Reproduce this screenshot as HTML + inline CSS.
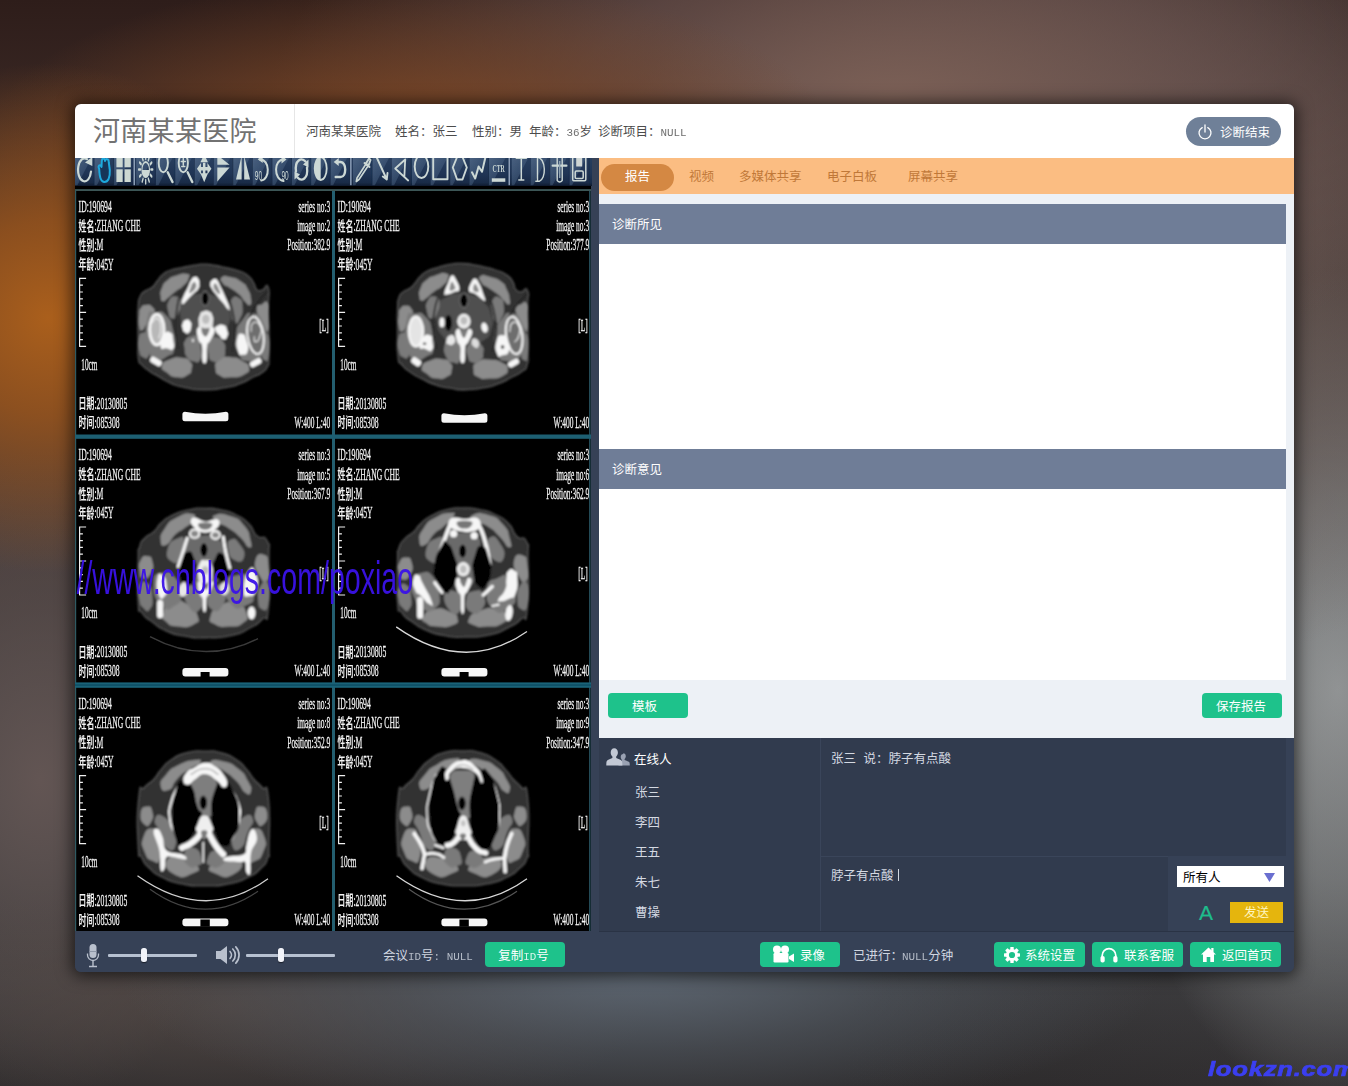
<!DOCTYPE html>
<html lang="zh-CN"><head><meta charset="utf-8"><title>远程会诊</title>
<style>
*{margin:0;padding:0;box-sizing:border-box}
html,body{width:1348px;height:1086px;overflow:hidden}
body{position:relative;font-family:"Liberation Sans","Noto Sans CJK SC",sans-serif;font-size:12.5px;
background:
 radial-gradient(ellipse 250px 255px at 48px 318px, #aa5f1c 0%, rgba(152,84,28,.85) 38%, rgba(120,70,40,0) 100%),
 radial-gradient(ellipse 430px 175px at 410px 150px, rgba(134,74,34,.95) 0%, rgba(120,68,36,.55) 55%, rgba(112,66,38,0) 100%),
 radial-gradient(ellipse 620px 290px at 890px 100px, rgba(126,98,88,.95) 0%, rgba(112,88,84,.65) 50%, rgba(98,82,80,0) 100%),
 radial-gradient(ellipse 520px 400px at 1090px 280px, rgba(114,98,92,.85) 0%, rgba(106,92,86,.5) 50%, rgba(100,88,84,0) 100%),
 linear-gradient(90deg, rgba(70,66,70,0) 62%, rgba(72,68,72,.2) 100%),
 radial-gradient(ellipse 230px 420px at 1338px 690px, #a2a6a6 0%, rgba(140,144,144,.8) 45%, rgba(100,102,102,0) 100%),
 radial-gradient(ellipse 520px 150px at 640px 975px, rgba(96,106,118,.9) 0%, rgba(86,94,104,.5) 50%, rgba(80,86,92,0) 100%),
 radial-gradient(ellipse 420px 130px at 230px 1005px, rgba(92,78,72,.6) 0%, rgba(88,76,72,.3) 55%, rgba(80,72,70,0) 100%),
 radial-gradient(ellipse 210px 330px at 40px 780px, rgba(100,86,84,.95) 0%, rgba(90,78,76,.5) 55%, rgba(80,70,70,0) 100%),
 linear-gradient(180deg,#2e1d1a 0%,#3e2c28 15%,#4a3c3a 45%,#454547 74%,#3a3a3c 90%,#2c2a2b 100%);
}
i{font-style:normal;font-family:"Liberation Mono",monospace;font-size:10.9px;opacity:.82}
.shadow{position:absolute;left:75px;top:104px;width:1219px;height:868px;border-radius:6px;box-shadow:0 1px 16px 3px rgba(0,0,0,.62);background:#364156}
.win{position:absolute;left:0;top:0;width:1348px;height:1086px}
.win>div,.win span,.hdr>div{position:absolute}
.hdr{left:75px;top:104px;width:1219px;height:54px;background:#fff;border-radius:6px 6px 0 0}
.logo{left:18px;top:8px;font-size:27px;font-weight:400;color:#727272;line-height:40px;white-space:nowrap;letter-spacing:.3px}
.vsep{left:219px;top:0;width:1px;height:54px;background:#e6e6e6}
.info{left:-75px;top:0;width:1219px;height:54px;color:#4c4c4c;font-weight:400}
.info span{top:1px;line-height:54px;white-space:nowrap}
.endbtn{left:1111px;top:13px;width:95px;height:29px;border-radius:15px;background:#6f8098;color:#fff}
.endbtn svg{position:absolute;left:11px;top:6.500px}
.endbtn span{left:34px;top:2px;line-height:29px;white-space:nowrap;font-weight:400}
.tb{left:75px;top:158px;width:517px;height:28px;overflow:hidden;background:#263a5a}
.ct{left:75px;top:186px;width:515.6px;height:745px;background:#000;overflow:hidden}
.tabs{left:599px;top:158px;width:695px;height:36px;background:#fbbd82;color:#c07838}
.tabs span{top:1px;line-height:36px;white-space:nowrap;margin-left:-599px;font-weight:400}
.pill{position:absolute;left:2px;top:6px;width:73px;height:27px;border-radius:14px;background:#d48843;color:#fff;text-align:center;line-height:27px}
.rp{left:599px;top:194px;width:695px;height:544px;background:#edf1f6}
.rp>div{position:absolute}
.rp .sech{left:0;width:687px;height:40px;background:#6f7d97;color:#fff;margin-top:-194px}
.rp .sech span{left:13px;top:1px;line-height:40px;white-space:nowrap;font-weight:400}
.rp .white{left:0;width:687px;background:#fff;margin-top:-194px}
.gbtn{position:absolute;height:25px;border-radius:4px;background:#1ec28b;color:#fff;text-align:center;line-height:29px;white-space:nowrap;font-weight:400}
.rp .gbtn{margin-left:-599px;margin-top:-194px}
.gbtn.ic svg{position:absolute}
.gbtn.ic span{top:0;line-height:29px}
.chat{left:0;top:0;width:0;height:0;color:#d4d9e2;font-weight:400}
.chat>div{position:absolute}
.chat-l{left:599px;top:738px;width:687px;height:194px;background:#313b4e}
.chat-r{left:1168px;top:856px;width:126px;height:76px;background:#364156}
.chat-rt{left:1286px;top:738px;width:8px;height:194px;background:#364156}
.vline{left:820px;top:738px;width:1px;height:194px;background:#3a455a}
.hline{left:820px;top:856px;width:348px;height:1px;background:#3a455a}
.people{position:absolute;left:606px;top:748px}
.t{white-space:nowrap;line-height:16px}
.t.w{color:#fff}
.caret{left:898px;top:869px;width:1px;height:12px;background:#d4d9e2}
.sel{left:1177px;top:866px;width:107px;height:21px;background:#fff;color:#000}
.sel span{left:6px;top:1px;line-height:22px;font-weight:400}
.sel svg{position:absolute;left:87px;top:7px}
.bigA{left:1199px;top:900px;font-size:21px;line-height:26px;color:#1ebc8c;font-weight:400;-webkit-text-stroke:.2px #1ebc8c;font-family:"Liberation Sans",sans-serif}
.send{left:1230px;top:902px;width:53px;height:21px;background:#e5b50d;color:#fff6c0;text-align:center;line-height:23px;font-weight:400}
.bb{left:75px;top:932px;width:1219px;height:40px;background:#364156;border-radius:0 0 6px 6px;color:#d0d6e0;font-weight:400}
.bb>*{margin-left:-75px;margin-top:-932px}
.bb .gbtn{color:#fff}
.track{position:absolute;top:954px;height:3px;background:#b7c1d1;border-radius:1px}
.thumb{position:absolute;top:948px;width:6px;height:14px;background:#f1f3f9;border-radius:2.500px;box-shadow:0 1px 1px rgba(0,0,0,.5)}
.wm2{position:absolute;left:1208px;top:1057px;font:italic 900 20.5px/24px "Liberation Sans",sans-serif;color:#3b3ff0;letter-spacing:.6px;white-space:nowrap;transform:scaleX(1.25);transform-origin:0 0;-webkit-text-stroke:.7px #3b3ff0}
.bline{left:599px;top:931px;width:695px;height:1px;background:#2a3345}

</style></head>
<body>
<div class="shadow"></div>
<div class="win">

<div class="hdr">
  <div class="logo">河南某某医院</div>
  <div class="vsep"></div>
  <div class="info"><span style="left:306px">河南某某医院</span><span style="left:395px">姓名：张三</span><span style="left:472px">性别：男</span><span style="left:529px">年龄：<i>36</i>岁</span><span style="left:598px">诊断项目：<i>NULL</i></span></div>
  <div class="endbtn"><svg width="16" height="16" viewBox="0 0 16 16"><path d="M5.2 3.6 A6 6 0 1 0 10.8 3.6" fill="none" stroke="#fff" stroke-width="1.3" stroke-linecap="round"/><path d="M8 1 V8" stroke="#fff" stroke-width="1.3" stroke-linecap="round"/></svg><span>诊断结束</span></div>
</div>
<div class="tb"><svg width="517" height="28" viewBox="0 0 517 28" style="position:absolute;left:0;top:0"><defs><linearGradient id="tg" x1="0" y1="0" x2="0" y2="1"><stop offset="0" stop-color="#283e5e"/><stop offset=".55" stop-color="#203555"/><stop offset=".88" stop-color="#192b47"/><stop offset="1" stop-color="#0f1b30"/></linearGradient><linearGradient id="fg" x1="0" y1="0" x2="1" y2="1"><stop offset="0" stop-color="#58708e" stop-opacity=".7"/><stop offset="1" stop-color="#3d5678" stop-opacity=".3"/></linearGradient><filter id="ib" x="-10%" y="-10%" width="120%" height="120%"><feGaussianBlur stdDeviation=".45"/></filter></defs><rect width="517" height="28" fill="url(#tg)"/><g filter="url(#ib)"><path d="M0 0H16.5L7.5 17L2 28H0Z" fill="url(#fg)"/><rect x="18.7" y="0" width="1" height="28" fill="#162842" opacity=".6"/><path d="M19.5 0H36L27 17L21.5 28H19.5Z" fill="url(#fg)"/><rect x="38.2" y="0" width="1" height="28" fill="#162842" opacity=".6"/><path d="M39.1 0H55.6L46.6 17L41.1 28H39.1Z" fill="url(#fg)"/><rect x="57.8" y="0" width="1" height="28" fill="#162842" opacity=".6"/><path d="M61.2 0H77.7L68.7 17L63.2 28H61.2Z" fill="url(#fg)"/><rect x="79.9" y="0" width="1" height="28" fill="#162842" opacity=".6"/><path d="M81 0H97.5L88.5 17L83 28H81Z" fill="url(#fg)"/><rect x="99.7" y="0" width="1" height="28" fill="#162842" opacity=".6"/><path d="M100.3 0H116.8L107.8 17L102.3 28H100.3Z" fill="url(#fg)"/><rect x="119" y="0" width="1" height="28" fill="#162842" opacity=".6"/><path d="M119.7 0H136.2L127.2 17L121.7 28H119.7Z" fill="url(#fg)"/><rect x="138.4" y="0" width="1" height="28" fill="#162842" opacity=".6"/><path d="M138.8 0H155.3L146.3 17L140.8 28H138.8Z" fill="url(#fg)"/><rect x="157.5" y="0" width="1" height="28" fill="#162842" opacity=".6"/><path d="M158.3 0H174.8L165.8 17L160.3 28H158.3Z" fill="url(#fg)"/><rect x="177" y="0" width="1" height="28" fill="#162842" opacity=".6"/><path d="M177.7 0H194.2L185.2 17L179.7 28H177.7Z" fill="url(#fg)"/><rect x="196.4" y="0" width="1" height="28" fill="#162842" opacity=".6"/><path d="M197.5 0H214L205 17L199.5 28H197.5Z" fill="url(#fg)"/><rect x="216.2" y="0" width="1" height="28" fill="#162842" opacity=".6"/><path d="M217 0H233.5L224.5 17L219 28H217Z" fill="url(#fg)"/><rect x="235.7" y="0" width="1" height="28" fill="#162842" opacity=".6"/><path d="M236.2 0H252.7L243.7 17L238.2 28H236.2Z" fill="url(#fg)"/><rect x="254.9" y="0" width="1" height="28" fill="#162842" opacity=".6"/><path d="M255.7 0H272.2L263.2 17L257.7 28H255.7Z" fill="url(#fg)"/><rect x="274.4" y="0" width="1" height="28" fill="#162842" opacity=".6"/><path d="M278 0H294.5L285.5 17L280 28H278Z" fill="url(#fg)"/><rect x="296.7" y="0" width="1" height="28" fill="#162842" opacity=".6"/><path d="M297.5 0H314L305 17L299.5 28H297.5Z" fill="url(#fg)"/><rect x="316.2" y="0" width="1" height="28" fill="#162842" opacity=".6"/><path d="M316.7 0H333.2L324.2 17L318.7 28H316.7Z" fill="url(#fg)"/><rect x="335.4" y="0" width="1" height="28" fill="#162842" opacity=".6"/><path d="M337 0H353.5L344.5 17L339 28H337Z" fill="url(#fg)"/><rect x="355.7" y="0" width="1" height="28" fill="#162842" opacity=".6"/><path d="M355.7 0H372.2L363.2 17L357.7 28H355.7Z" fill="url(#fg)"/><rect x="374.4" y="0" width="1" height="28" fill="#162842" opacity=".6"/><path d="M375.3 0H391.8L382.8 17L377.3 28H375.3Z" fill="url(#fg)"/><rect x="394" y="0" width="1" height="28" fill="#162842" opacity=".6"/><path d="M394.5 0H411L402 17L396.5 28H394.5Z" fill="url(#fg)"/><rect x="413.2" y="0" width="1" height="28" fill="#162842" opacity=".6"/><path d="M414 0H430.5L421.5 17L416 28H414Z" fill="url(#fg)"/><rect x="432.7" y="0" width="1" height="28" fill="#162842" opacity=".6"/><path d="M436.8 0H453.3L444.3 17L438.8 28H436.8Z" fill="url(#fg)"/><rect x="455.5" y="0" width="1" height="28" fill="#162842" opacity=".6"/><path d="M455.8 0H472.3L463.3 17L457.8 28H455.8Z" fill="url(#fg)"/><rect x="474.5" y="0" width="1" height="28" fill="#162842" opacity=".6"/><path d="M475.2 0H491.7L482.7 17L477.2 28H475.2Z" fill="url(#fg)"/><rect x="493.9" y="0" width="1" height="28" fill="#162842" opacity=".6"/><path d="M494.7 0H511.2L502.2 17L496.7 28H494.7Z" fill="url(#fg)"/><rect x="513.4" y="0" width="1" height="28" fill="#162842" opacity=".6"/></g><rect x="58.5" y="0" width="1.500" height="28" fill="#8b9db6"/><rect x="275.1" y="0" width="1.500" height="28" fill="#8b9db6"/><rect x="433.5" y="0" width="1.500" height="28" fill="#8b9db6"/><g filter="url(#ib)"><g transform="translate(9.5 0)"><path d="M2.500 1.200A6.500 11.500 0 1 0 6.500 13.500" fill="none" stroke="#ccd8d5" stroke-width="2.2" stroke-linecap="round" stroke-linejoin="round"/><path d="M0.500 4.500L7.800 -1V8z" fill="#ccd8d5"/></g><g transform="translate(29 0)"><path d="M-4.800 11C-6.500 7.500 -3.500 5.500 -2.500 9L-2.200 3C-2 -0.500 0.800 -0.500 1 3C1.800 0 4.800 0.500 4.800 4.500L5.800 12C6.200 20 4 24 0.300 24C-3 24 -4.500 20 -4.800 11Z" fill="#173558" stroke="#1fa9dd" stroke-width="2" stroke-linejoin="round"/></g><g transform="translate(48.6 0)"><rect x="-7.2" y="-1" width="6.3" height="10.3" fill="#cdd8d2"/><rect x="0.9" y="-1" width="6.3" height="10.3" fill="#cdd8d2"/><rect x="-7.2" y="11.3" width="6.3" height="12.7" fill="#cdd8d2"/><rect x="0.9" y="11.3" width="6.3" height="12.7" fill="#cdd8d2"/></g><g transform="translate(70.7 0)"><g transform="translate(0 11.500) scale(.5 1)"><path d="M0 -10.500V-14" transform="rotate(0)" stroke="#ccd8d5" stroke-width="2.600" stroke-linecap="round"/><path d="M0 -10.500V-14" transform="rotate(30)" stroke="#ccd8d5" stroke-width="2.600" stroke-linecap="round"/><path d="M0 -10.500V-14" transform="rotate(60)" stroke="#ccd8d5" stroke-width="2.600" stroke-linecap="round"/><path d="M0 -10.500V-14" transform="rotate(90)" stroke="#ccd8d5" stroke-width="2.600" stroke-linecap="round"/><path d="M0 -10.500V-14" transform="rotate(120)" stroke="#ccd8d5" stroke-width="2.600" stroke-linecap="round"/><path d="M0 -10.500V-14" transform="rotate(150)" stroke="#ccd8d5" stroke-width="2.600" stroke-linecap="round"/><path d="M0 -10.500V-14" transform="rotate(180)" stroke="#ccd8d5" stroke-width="2.600" stroke-linecap="round"/><path d="M0 -10.500V-14" transform="rotate(210)" stroke="#ccd8d5" stroke-width="2.600" stroke-linecap="round"/><path d="M0 -10.500V-14" transform="rotate(240)" stroke="#ccd8d5" stroke-width="2.600" stroke-linecap="round"/><path d="M0 -10.500V-14" transform="rotate(270)" stroke="#ccd8d5" stroke-width="2.600" stroke-linecap="round"/><path d="M0 -10.500V-14" transform="rotate(300)" stroke="#ccd8d5" stroke-width="2.600" stroke-linecap="round"/><path d="M0 -10.500V-14" transform="rotate(330)" stroke="#ccd8d5" stroke-width="2.600" stroke-linecap="round"/><circle r="7.500" fill="none" stroke="#ccd8d5" stroke-width="2.2" stroke-linecap="round" stroke-linejoin="round"/><path d="M-7.500 0.500A7.500 7.500 0 0 0 7.500 0.500Z" fill="#ccd8d5"/></g></g><g transform="translate(90.5 0)"><ellipse cx="-2.200" cy="5" rx="4.600" ry="9.200" fill="none" stroke="#ccd8d5" stroke-width="1.9" stroke-linecap="round" stroke-linejoin="round"/><path d="M2.200 14.300L7 24" fill="none" stroke="#ccd8d5" stroke-width="2.4" stroke-linecap="round" stroke-linejoin="round"/></g><g transform="translate(109.8 0)"><ellipse cx="-1.500" cy="5" rx="4.600" ry="9.200" fill="none" stroke="#ccd8d5" stroke-width="1.9" stroke-linecap="round" stroke-linejoin="round"/><path d="M2.800 14.300L7.500 24" fill="none" stroke="#ccd8d5" stroke-width="2.4" stroke-linecap="round" stroke-linejoin="round"/><path d="M-3.500 3.500H0.500M-1.500 0.500V7M-3 8.500H0" fill="none" stroke="#ccd8d5" stroke-width="1.5" stroke-linecap="round" stroke-linejoin="round"/></g><g transform="translate(129.2 0)"><g transform="translate(0 10.800) scale(.5 1)" fill="#ccd8d5"><path d="M-14.500 0L-6.500 -5.800V-1.700H6.500V-5.800L14.500 0L6.500 5.800V1.700H-6.500V5.800Z"/><path d="M0 13.500L-7.500 4.500H-2.400V-6H2.400V4.500H7.500Z"/><path d="M0 -14.500L-7.500 -6.500H7.500Z"/></g></g><g transform="translate(148.3 0)"><path d="M-6 -3V6.800H6.300Z" fill="#ccd8d5"/><path d="M-6 9.500H6.300L-6 23.500Z" fill="#ccd8d5"/></g><g transform="translate(167.8 0)"><path d="M-6.800 21.500H-1.200V-2Z" fill="#ccd8d5"/><path d="M1.400 -2V21.500H7.300Z" fill="#ccd8d5"/></g><g transform="translate(187.2 0)"><path d="M-2.500 1.500C8 1 8 21.500 -1 22.500" fill="none" stroke="#ccd8d5" stroke-width="2" stroke-linecap="round" stroke-linejoin="round"/><path d="M-4.500 1.200L0.500 -2.500V5z" fill="#ccd8d5"/><text transform="translate(-7.400 21.500) scale(.52 1)" font-family="'Liberation Sans',sans-serif" font-size="12.500" fill="#ccd8d5">90</text></g><g transform="translate(207 0)"><path d="M2 1.500C-8.500 1 -8.500 21.500 1.500 23" fill="none" stroke="#ccd8d5" stroke-width="2" stroke-linecap="round" stroke-linejoin="round"/><path d="M4.500 1.500L-0.500 -2.500V5.500z" fill="#ccd8d5"/><text transform="translate(-0.500 21.500) scale(.52 1)" font-family="'Liberation Sans',sans-serif" font-size="12.500" fill="#ccd8d5">90</text></g><g transform="translate(226.5 0)"><path d="M-5.500 13.500C-7 2 0 -1 4 3.500" fill="none" stroke="#ccd8d5" stroke-width="2.3" stroke-linecap="round" stroke-linejoin="round"/><path d="M5.500 9.500C7 21 0 24 -4 19.500" fill="none" stroke="#ccd8d5" stroke-width="2.3" stroke-linecap="round" stroke-linejoin="round"/><path d="M1.500 6.500L7 1.500V9.500z" fill="#ccd8d5"/><path d="M-1.500 16.500L-7 21.500V13.500z" fill="#ccd8d5"/></g><g transform="translate(245.7 0)"><ellipse cx="0" cy="10.500" rx="6" ry="11.500" fill="none" stroke="#ccd8d5" stroke-width="1.8" stroke-linecap="round" stroke-linejoin="round"/><path d="M0 -1A6 11.500 0 0 0 0 22Z" fill="#ccd8d5"/></g><g transform="translate(265.2 0)"><path d="M-2.500 4H0.500C6.500 4 6.500 19 0.500 19H-4.500" fill="none" stroke="#ccd8d5" stroke-width="2.4" stroke-linecap="round" stroke-linejoin="round"/><path d="M-6.500 4L-1.500 0V8z" fill="#ccd8d5"/></g><g transform="translate(287.5 0)"><path d="M3.500 6L-5.500 20L-6.200 23.500L-3.500 21.500L5.500 8Z" fill="none" stroke="#ccd8d5" stroke-width="1.6" stroke-linecap="round" stroke-linejoin="round"/><path d="M2 5L7 9M6.500 0.500L3.500 5.500L6 7.500L8 2Z" fill="none" stroke="#ccd8d5" stroke-width="2" stroke-linecap="round" stroke-linejoin="round"/></g><g transform="translate(307 0)"><path d="M-5.500 -1L4.800 21.500M5.500 15L4.800 21.500L0.800 18.500" fill="none" stroke="#ccd8d5" stroke-width="1.9" stroke-linecap="round" stroke-linejoin="round"/></g><g transform="translate(326.2 0)"><path d="M4 1.500L-6 10.500L7 22.500M4 1.500L3.200 18" fill="none" stroke="#ccd8d5" stroke-width="1.8" stroke-linecap="round" stroke-linejoin="round"/></g><g transform="translate(346.5 0)"><ellipse cx="0" cy="8.500" rx="6.800" ry="11.500" fill="none" stroke="#ccd8d5" stroke-width="1.9" stroke-linecap="round" stroke-linejoin="round"/></g><g transform="translate(365.2 0)"><rect x="-7" y="-3" width="14.300" height="24.300" fill="none" stroke="#ccd8d5" stroke-width="1.9" stroke-linecap="round" stroke-linejoin="round"/></g><g transform="translate(384.8 0)"><path d="M-7 9.500L-2.700 -1H2.700L7 9.500L2.700 21.500H-2.700Z" fill="none" stroke="#ccd8d5" stroke-width="1.9" stroke-linecap="round" stroke-linejoin="round"/></g><g transform="translate(404 0)"><path d="M-7 14.300L-3.800 20.500L-0.400 8.500L3 13.800L6.500 -1" fill="none" stroke="#ccd8d5" stroke-width="2" stroke-linecap="round" stroke-linejoin="round"/></g><g transform="translate(423.5 0)"><text transform="translate(-6 13.500) scale(.55 1)" font-family="'Liberation Serif',serif" font-weight="bold" font-size="10.500" fill="#ccd8d5">CTR</text><rect x="-6.700" y="20.300" width="13.500" height="3.500" fill="#ccd8d5"/></g><g transform="translate(446.3 0)"><path d="M0 0V22M-5 0.300H5M-2.500 22H2.500" fill="none" stroke="#ccd8d5" stroke-width="1.5" stroke-linecap="round" stroke-linejoin="round"/></g><g transform="translate(465.3 0)"><path d="M-2.800 -1V23M-4.500 23.300H-1C6 21 6 1 -3 -1" fill="none" stroke="#ccd8d5" stroke-width="1.4" stroke-linecap="round" stroke-linejoin="round"/></g><g transform="translate(484.7 0)"><path d="M-2.500 -1V22.500Q0 25.500 2.500 22.500V-1" fill="none" stroke="#ccd8d5" stroke-width="1.4" stroke-linecap="round" stroke-linejoin="round"/><path d="M-7 7.700H6.700" fill="none" stroke="#ccd8d5" stroke-width="2.2" stroke-linecap="round" stroke-linejoin="round"/><path d="M0 3V20" stroke="#8fa3b3" stroke-width="1.500"/></g><g transform="translate(504.2 0)"><path d="M-6.500 -2V21.500Q-6.500 22.700 -5.300 22.700H5.400Q6.600 22.700 6.600 21.500V-2" fill="none" stroke="#ccd8d5" stroke-width="1.5" stroke-linecap="round" stroke-linejoin="round"/><rect x="-3" y="-1" width="6" height="9.500" fill="#cfd6d4"/><rect x="-4" y="13" width="8" height="7.500" rx="1.200" fill="none" stroke="#ccd8d5" stroke-width="1.5" stroke-linecap="round" stroke-linejoin="round"/><rect x="-1.800" y="15.500" width="3.600" height="2.500" fill="#1a2c48"/></g></g><rect x="0" y="27" width="517" height="1" fill="#101c30" opacity=".8"/></svg></div>
<div class="ct"><svg width="516" height="745" viewBox="0 0 516 745" style="position:absolute;left:0;top:0"><defs><filter id="bl" x="-5%" y="-5%" width="110%" height="110%"><feGaussianBlur stdDeviation="7"/></filter><filter id="tb" x="-5%" y="-20%" width="110%" height="140%"><feGaussianBlur stdDeviation="0.35"/></filter><clipPath id="cc"><rect x="-40" y="-60" width="1166" height="1300"/></clipPath></defs><g transform="translate(58 72) scale(0.12891)" filter="url(#bl)"><path d="M560 48C506.7 47 540 46 480 55C420 64 443.3 61.7 380 75C316.7 88.3 338.3 78.3 290 95C241.7 111.7 268.3 98.3 235 125C201.7 151.7 218.3 141.7 190 175C161.7 208.3 181.7 198.3 150 225C118.3 251.7 126.7 230 95 255C63.3 280 73.3 258.3 55 300C36.7 341.7 45.7 313.3 40 380C34.3 446.7 38 413.3 38 500C38 586.7 38.7 546.7 40 640C41.3 733.3 32 716.7 42 780C52 843.3 40.7 796.7 70 830C99.3 863.3 86.7 850 130 880C173.3 910 146.7 890 200 920C253.3 950 223.3 941.7 290 970C356.7 998.3 310 987.7 400 1005C490 1022.3 453.3 1022 560 1022C666.7 1022 630 1020.7 720 1005C810 989.3 760 1001.7 830 975C900 948.3 873.3 953.3 930 925C986.7 896.7 961.7 918.3 1000 890C1038.3 861.7 1026.7 876.7 1045 840C1063.3 803.3 1051.7 860 1055 780C1058.3 700 1056.7 726.7 1055 600C1053.3 473.3 1051.7 523.3 1050 400C1048.3 276.7 1066.7 280 1050 230C1033.3 180 1030 245 1000 250C970 255 981.7 265 960 245C938.3 225 958.3 226.7 935 190C911.7 153.3 928.3 165 890 135C851.7 105 876.7 120 820 100C763.3 80 780 89 720 75C660 61 693.3 67 640 58C586.7 49 613.3 49 560 48Z" fill="#333" stroke="#565656" stroke-width="10"/><path d="M215 300C211.7 265 206.7 273.3 225 230C243.3 186.7 231.7 201.7 270 170C308.3 138.3 290 150 340 135C390 120 390 116.7 420 125C450 133.3 440 130 430 160C420 190 423.3 181.7 390 215C356.7 248.3 370 228.3 330 260C290 291.7 301.7 285 270 310C238.3 335 253.3 338.3 235 335C216.7 331.7 218.3 335 215 300Z" fill="#8c8c8c"/><path d="M690 150C710 133.3 710 138.3 760 150C810 161.7 796.7 155 840 185C883.3 215 865 195 890 240C915 285 910 278.3 915 320C920 361.7 920 358.3 905 365C890 371.7 898.3 368.3 870 340C841.7 311.7 860 316.7 820 280C780 243.3 790 256.7 750 230C710 203.3 720 226.7 700 200C680 173.3 670 166.7 690 150Z" fill="#8c8c8c"/><path d="M48 440C52 393.3 42.7 415 60 390C77.3 365 70 368.3 100 365C130 361.7 128.3 358.3 150 380C171.7 401.7 171.7 400 165 430C158.3 460 151.7 440 130 470C108.3 500 120 490 100 520C80 550 87.3 556.7 70 560C52.7 563.3 55.3 570 48 530C40.7 490 44 486.7 48 440Z" fill="#8c8c8c"/><path d="M45 620C55.7 573.3 56.7 586.7 80 580C103.3 573.3 98.3 566.7 115 600C131.7 633.3 128.3 626.7 130 680C131.7 733.3 136.7 730 120 760C103.3 790 104 783.3 80 770C56 756.7 59.7 770 48 720C36.3 670 34.3 666.7 45 620Z" fill="#7a7a7a"/><path d="M110 470C130 376.7 130 426.7 180 420C230 413.3 216.7 403.3 260 450C303.3 496.7 290 476.7 310 560C330 643.3 333.3 633.3 320 700C306.7 766.7 316.7 733.3 270 760C223.3 786.7 230 800 180 780C130 760 143.3 803.3 120 700C96.7 596.7 90 563.3 110 470Z" fill="#7a7a7a"/><path d="M960 390C963.3 350 971.7 373.3 1000 360C1028.3 346.7 1027.7 320 1045 350C1062.3 380 1050.3 380 1052 450C1053.7 520 1060.7 530 1050 560C1039.3 590 1040 566.7 1020 540C1000 513.3 1010 530 990 480C970 430 956.7 430 960 390Z" fill="#8c8c8c"/><path d="M1005 640C1021.7 593.3 1034.3 560 1050 600C1065.7 640 1062 696.7 1052 760C1042 823.3 1037.3 796.7 1020 790C1002.7 783.3 1005 790 1000 740C995 690 988.3 686.7 1005 640Z" fill="#7a7a7a"/><path d="M800 600C810 513.3 806.7 536.7 850 480C893.3 423.3 876.7 423.3 930 430C983.3 436.7 976.7 426.7 1010 500C1043.3 573.3 1033.3 563.3 1030 650C1026.7 736.7 1043.3 710 1000 760C956.7 810 960 806.7 900 800C840 793.3 853.3 806.7 820 740C786.7 673.3 790 686.7 800 600Z" fill="#7a7a7a"/><path d="M225 835C233.3 800 238.3 805 290 785C341.7 765 330 770 380 775C430 780 415 771.7 440 800C465 828.3 461.7 823.3 455 860C448.3 896.7 458.3 888.3 420 910C381.7 931.7 391.7 931.7 340 925C288.3 918.3 303.3 920 265 890C226.7 860 216.7 870 225 835Z" fill="#8c8c8c"/><path d="M640 860C636.7 818.3 630 820 670 790C710 760 700 766.7 760 770C820 773.3 803.3 773.3 850 800C896.7 826.7 896.7 815 900 850C903.3 885 906.7 880 860 905C813.3 930 820 921.7 760 925C700 928.3 720 936.7 680 915C640 893.3 643.3 901.7 640 860Z" fill="#8c8c8c"/><path d="M380 360C406.7 306.7 403.3 326.7 450 300C496.7 273.3 463.3 283.3 520 280C576.7 276.7 560 270 620 290C680 310 656.7 296.7 700 340C743.3 383.3 736.7 360 750 420C763.3 480 756.7 460 740 520C723.3 580 746.7 560 700 600C653.3 640 673.3 630 600 640C526.7 650 546.7 656.7 480 630C413.3 603.3 436.7 616.7 400 560C363.3 503.3 376.7 526.7 370 460C363.3 393.3 353.3 413.3 380 360Z" fill="#505050"/><path d="M405 640C421.7 610 416.7 616.7 450 610C483.3 603.3 480 590 505 620C530 650 520 643.3 525 700C530 756.7 538.3 756.7 520 790C501.7 823.3 503.3 806.7 470 800C436.7 793.3 443.3 803.3 420 770C396.7 736.7 405 743.3 400 700C395 656.7 388.3 670 405 640Z" fill="#7a7a7a"/><path d="M590 640C611.7 600 613.3 616.7 650 620C686.7 623.3 678.3 616.7 700 650C721.7 683.3 718.3 676.7 715 720C711.7 763.3 721.7 753.3 690 780C658.3 806.7 655 813.3 620 800C585 786.7 595 793.3 585 740C575 686.7 568.3 680 590 640Z" fill="#7a7a7a"/><path d="M280 330C301.7 290 310 296.7 340 300C370 303.3 366.7 296.7 370 340C373.3 383.3 370 386.7 350 430C330 473.3 335 473.3 310 470C285 466.7 285 466.7 275 420C265 373.3 258.3 370 280 330Z" fill="#7a7a7a"/><path d="M760 330C780 293.3 790 293.3 820 310C850 326.7 846.7 326.7 850 380C853.3 433.3 850 430 830 470C810 510 813.3 516.7 790 500C766.7 483.3 770 476.7 760 420C750 363.3 740 366.7 760 330Z" fill="#7a7a7a"/><path d="M370 250C360 300 353.3 296.7 340 400C326.7 503.3 326.7 460 330 560C333.3 660 343.3 653.3 350 700" fill="none" stroke="#2a2a2a" stroke-width="14" stroke-linecap="round" stroke-linejoin="round"/><path d="M740 300C753.3 350 763.3 350 780 450C796.7 550 793.3 510 790 600C786.7 690 776.7 680 770 720" fill="none" stroke="#2a2a2a" stroke-width="14" stroke-linecap="round" stroke-linejoin="round"/><path d="M1040 260C1013.3 293.3 1006.7 290 960 360C913.3 430 920 433.3 900 470" fill="none" stroke="#262626" stroke-width="16" stroke-linecap="round" stroke-linejoin="round"/><path d="M478 148C496.3 143 492.7 142.7 505 160C517.3 177.3 515 173.3 515 200C515 226.7 520 215 505 240C490 265 498.3 246.7 470 275C441.7 303.3 446.7 298.3 420 325C393.3 351.7 404 350 390 355C376 360 376.3 361.7 378 340C379.7 318.3 379.3 326.7 395 290C410.7 253.3 406.7 268.3 425 230C443.3 191.7 432.3 202.3 450 175C467.7 147.7 459.7 153 478 148Z" fill="#f6f6f6"/><path d="M468 190C482.3 178.3 482.3 185 488 200C493.7 215 496 213.3 485 235C474 256.7 470.7 253.3 455 265C439.3 276.7 441.3 280 438 270C434.7 260 435 261.7 445 235C455 208.3 453.7 201.7 468 190Z" fill="#8a8a8a"/><path d="M612 175C623.7 162.3 620.7 162 635 162C649.3 162 640 154 655 175C670 196 660 183.3 680 225C700 266.7 692.3 246.7 715 300C737.7 353.3 741.3 353.3 748 385C754.7 416.7 751 406.7 735 395C719 383.3 728.3 385 700 350C671.7 315 680 328.3 650 290C620 251.7 626.7 265 610 235C593.3 205 599.3 220 600 200C600.7 180 600.3 187.7 612 175Z" fill="#f6f6f6"/><path d="M632 200C639.7 193.3 634.7 186.7 648 205C661.3 223.3 665.3 230 672 255C678.7 280 678.7 280 668 280C657.3 280 654.3 273.3 640 255C625.7 236.7 627.7 243.3 625 225C622.3 206.7 624.3 206.7 632 200Z" fill="#8a8a8a"/><ellipse cx="185" cy="555" rx="56" ry="118" fill="#b8b8b8" stroke="#f6f6f6" stroke-width="22"/><path d="M235 600C260 563.3 264.3 566.7 290 580C315.7 593.3 305.3 598.3 312 640C318.7 681.7 327.3 685 310 705C292.7 725 291.7 705 260 700C228.3 695 223.3 723.3 215 690C206.7 656.7 210 636.7 235 600Z" fill="#f6f6f6"/><path d="M150 500C163.3 490 168.3 456.7 190 470C211.7 483.3 211.7 490 215 540C218.3 590 205 593.3 200 620" fill="none" stroke="#e8e8e8" stroke-width="10" stroke-linecap="round" stroke-linejoin="round"/><rect x="130.5" y="779" width="95" height="48" rx="18" fill="#f6f6f6" transform="rotate(30 178 803)"/><ellipse cx="950" cy="600" rx="62" ry="145" fill="#6e6e6e" transform="rotate(-8 950 600)" stroke="#f6f6f6" stroke-width="15"/><path d="M915 570C920 548.3 906.7 520 930 505C953.3 490 966.7 491.7 985 525C1003.3 558.3 996.7 563.3 985 605C973.3 646.7 965 648.3 950 650C935 651.7 943.3 623.3 940 610" fill="none" stroke="#eee" stroke-width="8" stroke-linecap="round" stroke-linejoin="round"/><path d="M810 620C821.7 576.7 826.7 583.3 850 590C873.3 596.7 866.7 596.7 880 640C893.3 683.3 900 683.3 890 720C880 756.7 875 750 850 750C825 750 828.3 763.3 815 720C801.7 676.7 798.3 663.3 810 620Z" fill="#f6f6f6"/><rect x="904.5" y="789.5" width="95" height="45" rx="18" fill="#f6f6f6" transform="rotate(-28 952 812)"/><path d="M520 440C531.7 411.7 521.7 423.3 545 415C568.3 406.7 566.7 405 590 415C613.3 425 605 416.7 615 445C625 473.3 625 468.3 620 500C615 531.7 630 526.7 600 540C570 553.3 560 553.3 530 540C500 526.7 513.3 533.3 510 500C506.7 466.7 508.3 468.3 520 440Z" fill="#e6e6e6"/><ellipse cx="565" cy="475" rx="28" ry="35" fill="#bdbdbd"/><path d="M495 560C498 539 514 527 525 535C536 543 540 587 550 600C560 613 565 613 575 600C585 587 588 543 600 535C612 527 635 539 635 560C635 581 612 616 600 640C588 664 581 648 575 680C569 712 577 776 570 800C563 824 547 824 540 800C533 776 541 712 535 680C529 648 518 664 510 640C502 616 492 581 495 560Z" fill="#f6f6f6"/><path d="M535 550C545 542 581 542 590 550C599 558 586 579 580 590C574 601 568 605 560 605C552 605 545 601 540 590C535 579 525 558 535 550Z" fill="#7c7c7c"/><path d="M385 510C393.3 488.3 390 485 410 480C430 475 431.7 475 445 495C458.3 515 455 511.7 450 540C445 568.3 446.7 568.3 430 580C413.3 591.7 415 586.7 400 575C385 563.3 390 566.7 385 545C380 523.3 376.7 531.7 385 510Z" fill="#f6f6f6"/><path d="M650 530C670 516.7 673.3 510 700 520C726.7 530 720 530 730 560C740 590 740 586.7 730 610C720 633.3 720 633.3 700 630C680 626.7 690 623.3 670 600C650 576.7 646.7 583.3 640 560C633.3 536.7 630 543.3 650 530Z" fill="#f6f6f6"/><ellipse cx="465" cy="640" rx="9" ry="14" fill="#ddd"/><ellipse cx="560" cy="315" rx="34" ry="60" fill="#777"/><ellipse cx="560" cy="315" rx="27" ry="52" fill="#000"/></g><g transform="translate(318 72) scale(0.12891)" filter="url(#bl)"><path d="M520 42C463.3 42 496.7 40 440 50C383.3 60 406.7 55.3 350 72C293.3 88.7 315 77.3 270 100C225 122.7 248.3 108.3 215 140C181.7 171.7 198.3 163.3 170 195C141.7 226.7 160 212.7 130 235C100 257.3 108.3 237 80 262C51.7 287 60 264 45 310C30 356 38.3 316.7 35 400C31.7 483.3 34 440 35 560C36 680 26.3 670 38 760C49.7 850 36 786.7 70 830C104 873.3 86.7 853.3 140 890C193.3 926.7 166.7 908.3 230 940C293.3 971.7 260 961.7 330 985C400 1008.3 363.3 997.7 440 1010C516.7 1022.3 473.3 1022.7 560 1022C646.7 1021.3 613.3 1023.7 700 1008C786.7 992.3 746.7 1002.7 820 975C893.3 947.3 860 956.7 920 925C980 893.3 960 911.7 1000 880C1040 848.3 1024 890 1040 830C1056 770 1046.3 843.3 1048 700C1049.7 556.7 1046 548.3 1045 400C1044 251.7 1063.3 301 1045 255C1026.7 209 1021.7 267 990 262C958.3 257 970 265.7 950 240C930 214.3 953.3 221.7 930 185C906.7 148.3 923.3 160 880 130C836.7 100 860 115.7 800 95C740 74.3 763.3 83 700 68C636.7 53 670 58.7 610 50C550 41.3 576.7 42 520 42Z" fill="#333" stroke="#565656" stroke-width="10"/><path d="M205 300C201.7 266.7 196.7 273.3 215 230C233.3 186.7 221.7 201.7 260 170C298.3 138.3 280 151.7 330 135C380 118.3 378.3 111.7 410 120C441.7 128.3 433.3 128.3 425 160C416.7 191.7 420 181.7 385 215C350 248.3 361.7 228.3 320 260C278.3 291.7 291.7 286.7 260 310C228.3 333.3 243.3 333.3 225 330C206.7 326.7 208.3 333.3 205 300Z" fill="#8c8c8c"/><path d="M680 140C703.3 125 706.7 135 760 150C813.3 165 800 155 840 185C880 215 858.3 195 880 240C901.7 285 900 280 905 320C910 360 910 356.7 895 360C880 363.3 888.3 356.7 860 330C831.7 303.3 850 313.3 810 280C770 246.7 780 258.3 740 230C700 201.7 710 225 690 195C670 165 656.7 155 680 140Z" fill="#8c8c8c"/><path d="M45 440C50 393.3 41.7 413.3 60 390C78.3 366.7 73.3 370 100 370C126.7 370 123.3 366.7 140 390C156.7 413.3 156.7 410 150 440C143.3 470 136.7 450 120 480C103.3 510 116.7 500 100 530C83.3 560 88.3 570 70 570C51.7 570 53.3 573.3 45 530C36.7 486.7 40 486.7 45 440Z" fill="#8c8c8c"/><path d="M42 620C53.7 573.3 55.7 586.7 80 580C104.3 573.3 98.3 566.7 115 600C131.7 633.3 128.3 626.7 130 680C131.7 733.3 136.7 730 120 760C103.3 790 105 783.3 80 770C55 756.7 57.7 770 45 720C32.3 670 30.3 666.7 42 620Z" fill="#7a7a7a"/><path d="M105 480C125 390 125 436.7 175 430C225 423.3 211.7 413.3 255 460C298.3 506.7 285 490 305 570C325 650 328.3 636.7 315 700C301.7 763.3 311.7 733.3 265 760C218.3 786.7 225 800 175 780C125 760 138.3 800 115 700C91.7 600 85 570 105 480Z" fill="#7a7a7a"/><path d="M950 390C951.7 350 960.7 371.7 990 360C1019.3 348.3 1019.7 325 1038 355C1056.3 385 1043.7 381.7 1045 450C1046.3 518.3 1052 530 1042 560C1032 590 1034 566.7 1015 540C996 513.3 1006.7 530 985 480C963.3 430 948.3 430 950 390Z" fill="#8c8c8c"/><path d="M1000 640C1015.7 593.3 1027 560 1042 600C1057 640 1054 696.7 1045 760C1036 823.3 1031.7 796.7 1015 790C998.3 783.3 1000 790 995 740C990 690 984.3 686.7 1000 640Z" fill="#7a7a7a"/><path d="M790 600C800 513.3 796.7 536.7 840 480C883.3 423.3 866.7 423.3 920 430C973.3 436.7 966.7 426.7 1000 500C1033.3 573.3 1023.3 563.3 1020 650C1016.7 736.7 1033.3 710 990 760C946.7 810 950 806.7 890 800C830 793.3 843.3 806.7 810 740C776.7 673.3 780 686.7 790 600Z" fill="#7a7a7a"/><path d="M225 845C233.3 810 238.3 815 290 795C341.7 775 330 780 380 785C430 790 415 781.7 440 810C465 838.3 461.7 833.3 455 870C448.3 906.7 458.3 898.3 420 920C381.7 941.7 391.7 941.7 340 935C288.3 928.3 303.3 930 265 900C226.7 870 216.7 880 225 845Z" fill="#8c8c8c"/><path d="M625 870C623.3 830 615 831.7 660 805C705 778.3 696.7 786.7 760 790C823.3 793.3 806.7 791.7 850 815C893.3 838.3 890 826.7 890 860C890 893.3 896.7 890 850 915C803.3 940 811.7 931.7 750 935C688.3 938.3 706.7 946.7 665 925C623.3 903.3 626.7 910 625 870Z" fill="#8c8c8c"/><path d="M340 380C366.7 316.7 360 335 420 300C480 265 453.3 278.3 520 275C586.7 271.7 560 268.3 620 290C680 311.7 653.3 290 700 340C746.7 390 740 366.7 760 440C780 513.3 780 493.3 760 560C740 626.7 753.3 603.3 700 640C646.7 676.7 676.7 663.3 600 670C523.3 676.7 543.3 683.3 470 660C396.7 636.7 423.3 656.7 380 600C336.7 543.3 353.3 563.3 340 490C326.7 416.7 313.3 443.3 340 380Z" fill="#505050"/><path d="M400 680C410 636.7 415 656.7 450 650C485 643.3 480 636.7 505 660C530 683.3 521.7 673.3 525 720C528.3 766.7 533.3 770 515 800C496.7 830 501.7 816.7 470 810C438.3 803.3 443.3 823.3 420 780C396.7 736.7 390 723.3 400 680Z" fill="#7a7a7a"/><path d="M580 680C600 646.7 603.3 660 640 660C676.7 660 670 653.3 690 680C710 706.7 703.3 703.3 700 740C696.7 776.7 706.7 766.7 680 790C653.3 813.3 653.3 820 620 810C586.7 800 593.3 803.3 580 760C566.7 716.7 560 713.3 580 680Z" fill="#7a7a7a"/><path d="M270 330C291.7 290 300 296.7 330 300C360 303.3 356.7 296.7 360 340C363.3 383.3 360 386.7 340 430C320 473.3 325 473.3 300 470C275 466.7 275 466.7 265 420C255 373.3 248.3 370 270 330Z" fill="#7a7a7a"/><path d="M770 330C790 293.3 800 293.3 830 310C860 326.7 856.7 326.7 860 380C863.3 433.3 860 430 840 470C820 510 823.3 516.7 800 500C776.7 483.3 780 476.7 770 420C760 363.3 750 366.7 770 330Z" fill="#7a7a7a"/><path d="M350 300C340 340 333.3 333.3 320 420C306.7 506.7 303.3 466.7 310 560C316.7 653.3 330 653.3 340 700" fill="none" stroke="#2a2a2a" stroke-width="14" stroke-linecap="round" stroke-linejoin="round"/><path d="M750 300C763.3 350 773.3 350 790 450C806.7 550 806.7 510 800 600C793.3 690 780 680 770 720" fill="none" stroke="#2a2a2a" stroke-width="14" stroke-linecap="round" stroke-linejoin="round"/><path d="M1035 280C1006.7 313.3 998.3 313.3 950 380C901.7 446.7 910 446.7 890 480" fill="none" stroke="#262626" stroke-width="16" stroke-linecap="round" stroke-linejoin="round"/><path d="M455 135C470.2 128 476 144.3 490 170C504 195.7 519.7 222.8 515 245C510.3 267.2 494.5 255.7 470 265C445.5 274.3 426.3 285 410 285C393.7 285 396.5 284.8 400 265C403.5 245.2 412.2 230.3 425 200C437.8 169.7 439.8 142 455 135Z" fill="#f6f6f6"/><path d="M455 185C463.9 176.8 472.2 202.2 478 215C483.8 227.8 488.9 231.8 480 240C471.1 248.2 445.8 262.8 440 250C434.2 237.2 446.1 193.2 455 185Z" fill="#8a8a8a"/><path d="M610 185C621.7 162.8 626 156.5 640 160C654 163.5 656 172 670 200C684 228 689.5 249.7 700 280C710.5 310.3 717.3 320.7 715 330C712.7 339.3 707.5 331.7 690 320C672.5 308.3 663.3 295.2 640 280C616.7 264.8 597 277.2 590 255C583 232.8 598.3 207.2 610 185Z" fill="#f6f6f6"/><path d="M630 205C635.8 195.7 641.8 202.2 650 215C658.2 227.8 670.8 250.7 665 260C659.2 269.3 633.2 267.8 625 255C616.8 242.2 624.2 214.3 630 205Z" fill="#8a8a8a"/><ellipse cx="178" cy="570" rx="55" ry="115" fill="#e4e4e4" stroke="#f6f6f6" stroke-width="18"/><path d="M230 620C256.7 590 260 590 285 600C310 610 300 611.7 305 650C310 688.3 318.3 696.7 300 715C281.7 733.3 281.7 713.3 250 705C218.3 696.7 211.7 718.3 205 690C198.3 661.7 203.3 650 230 620Z" fill="#f6f6f6"/><ellipse cx="245" cy="665" rx="14" ry="10" fill="#555"/><rect x="140" y="780" width="80" height="50" rx="20" fill="#f6f6f6" transform="rotate(35 180 805)"/><ellipse cx="940" cy="600" rx="62" ry="145" fill="#6e6e6e" transform="rotate(-8 940 600)" stroke="#f6f6f6" stroke-width="16"/><path d="M905 570C911.7 548.3 901.7 520 925 505C948.3 490 958.3 491.7 975 525C991.7 558.3 985 563.3 975 605C965 646.7 955 635 945 650" fill="none" stroke="#eee" stroke-width="9" stroke-linecap="round" stroke-linejoin="round"/><path d="M805 640C819 591.7 821.7 600 850 600C878.3 600 873.3 600 890 640C906.7 680 913.3 681.7 900 720C886.7 758.3 880.7 746.7 850 755C819.3 763.3 823 783.3 808 745C793 706.7 791 688.3 805 640Z" fill="#f6f6f6"/><ellipse cx="850" cy="690" rx="14" ry="16" fill="#555"/><rect x="890" y="792.5" width="90" height="45" rx="20" fill="#f6f6f6" transform="rotate(-28 935 815)"/><ellipse cx="550" cy="490" rx="52" ry="58" fill="#ececec"/><ellipse cx="550" cy="485" rx="26" ry="30" fill="#bcbcbc"/><path d="M485 575C488.4 555 504 543 515 550C526 557 531 598 540 610C549 622 551 622 560 610C569 598 574 557 585 550C596 543 615 555 615 575C615 595 596 627 585 650C574 673 566 660 560 690C554 720 562 778 555 800C548 822 531.6 822 525 800C518.4 778 527.4 720 522 690C516.6 660 505.4 673 498 650C490.6 627 481.6 595 485 575Z" fill="#f6f6f6"/><path d="M525 560C533.4 553 567 553 575 560C583 567 570.4 585 565 595C559.6 605 554.4 610 548 610C541.6 610 537.6 605 533 595C528.4 585 516.6 567 525 560Z" fill="#7c7c7c"/><ellipse cx="380" cy="500" rx="20" ry="38" fill="#f6f6f6"/><ellipse cx="710" cy="540" rx="24" ry="40" fill="#f6f6f6" transform="rotate(-15 710 540)"/><path d="M415 640C420 616.7 423.3 606.7 445 600C466.7 593.3 471.7 598.3 480 620C488.3 641.7 486.7 648.3 470 665C453.3 681.7 448.3 678.3 430 670C411.7 661.7 410 663.3 415 640Z" fill="#e8e8e8"/><path d="M610 640C616.7 620 631.7 616.7 650 630C668.3 643.3 671.7 660 665 680C658.3 700 648.3 703.3 630 690C611.7 676.7 603.3 660 610 640Z" fill="#ddd"/><ellipse cx="550" cy="330" rx="35" ry="61" fill="#777"/><ellipse cx="550" cy="330" rx="28" ry="53" fill="#000"/><ellipse cx="430" cy="505" rx="26" ry="63" fill="#000"/></g><g transform="translate(58 320) scale(0.12891)" filter="url(#bl)"><path d="M560 18C476.7 18 516.7 11 430 30C343.3 49 370 41.7 300 75C230 108.3 266.7 88.3 220 130C173.3 171.7 203.3 160 160 200C116.7 240 126.7 210 90 250C53.3 290 66.7 263.3 50 320C33.3 376.7 43.3 280 40 420C36.7 560 30 603.3 40 740C50 876.7 33.3 776.7 70 830C106.7 883.3 86.7 853.3 150 900C213.3 946.7 176.7 933.3 260 970C343.3 1006.7 300 992.7 400 1010C500 1027.3 440 1023.7 560 1022C680 1020.3 646.7 1029 760 1005C873.3 981 820 991.7 900 950C980 908.3 950 930 1000 880C1050 830 1031.7 953.3 1050 800C1068.3 646.7 1058.3 596.7 1055 420C1051.7 243.3 1071.7 333.3 1040 270C1008.3 206.7 1006.7 273.3 960 230C913.3 186.7 953.3 193.3 900 140C846.7 86.7 873.3 106.7 800 70C726.7 33.3 760 47.3 680 30C600 12.7 643.3 18 560 18Z" fill="#333" stroke="#565656" stroke-width="10"/><path d="M215 270C211.7 226.7 208.3 230 250 170C291.7 110 273.3 126.7 340 90C406.7 53.3 406.7 53.3 450 60C493.3 66.7 486.7 73.3 470 110C453.3 146.7 446.7 133.3 400 170C353.3 206.7 376.7 176.7 330 220C283.3 263.3 298.3 283.3 260 300C221.7 316.7 218.3 313.3 215 270Z" fill="#8c8c8c"/><path d="M640 70C676.7 56.7 686.7 53.3 760 80C833.3 106.7 810 90 860 150C910 210 896.7 203.3 910 260C923.3 316.7 926.7 326.7 900 320C873.3 313.3 883.3 290 830 240C776.7 190 800 210 740 170C680 130 683.3 153.3 650 120C616.7 86.7 603.3 83.3 640 70Z" fill="#8c8c8c"/><path d="M270 330C286.7 270 306.7 266.7 350 250C393.3 233.3 390 230 400 280C410 330 413.3 350 380 400C346.7 450 336.7 453.3 300 430C263.3 406.7 253.3 390 270 330Z" fill="#7a7a7a"/><path d="M760 260C790 246.7 796.7 253.3 830 300C863.3 346.7 873.3 360 860 400C846.7 440 830 440 790 420C750 400 750 393.3 740 340C730 286.7 730 273.3 760 260Z" fill="#7a7a7a"/><path d="M60 420C80 383.3 80 386.7 110 390C140 393.3 140 386.7 150 430C160 473.3 163.3 476.7 140 520C116.7 563.3 110 566.7 80 560C50 553.3 56.7 546.7 50 500C43.3 453.3 40 456.7 60 420Z" fill="#8c8c8c"/><path d="M950 420C963.3 366.7 986.7 366.7 1020 380C1053.3 393.3 1043.3 393.3 1050 460C1056.7 526.7 1063.3 553.3 1040 580C1016.7 606.7 1010 593.3 980 540C950 486.7 936.7 473.3 950 420Z" fill="#8c8c8c"/><path d="M235 830C248.3 776.7 238.3 763.3 300 740C361.7 716.7 353.3 723.3 420 760C486.7 796.7 483.3 796.7 500 850C516.7 903.3 520 891.7 470 920C420 948.3 420 941.7 350 935C280 928.3 298.3 935 260 900C221.7 865 221.7 883.3 235 830Z" fill="#8c8c8c"/><path d="M600 860C613.3 810 613.3 803.3 680 770C746.7 736.7 733.3 740 800 760C866.7 780 863.3 780 880 830C896.7 880 896.7 875 850 910C803.3 945 810 931.7 740 935C670 938.3 686.7 945 640 920C593.3 895 586.7 910 600 860Z" fill="#8c8c8c"/><path d="M160 600C163.3 516.7 173.3 533.3 230 520C286.7 506.7 283.3 506.7 330 560C376.7 613.3 370 610 370 680C370 750 380 740 330 770C280 800 276.7 826.7 220 770C163.3 713.3 156.7 683.3 160 600Z" fill="#7a7a7a"/><path d="M720 600C733.3 526.7 740 553.3 800 540C860 526.7 853.3 513.3 900 560C946.7 606.7 946.7 610 940 680C933.3 750 940 743.3 880 770C820 796.7 813.3 816.7 760 760C706.7 703.3 706.7 673.3 720 600Z" fill="#7a7a7a"/><path d="M50 620C70.7 580 76.7 573.3 110 600C143.3 626.7 143.3 633.3 150 700C156.7 766.7 153.3 770 130 800C106.7 830 107.3 816.7 80 790C52.7 763.3 58 776.7 48 720C38 663.3 29.3 660 50 620Z" fill="#7a7a7a"/><path d="M990 620C1015 580 1025 553.3 1045 600C1065 646.7 1065 693.3 1050 760C1035 826.7 1026.7 813.3 1000 800C973.3 786.7 973.3 780 970 720C966.7 660 965 660 990 620Z" fill="#7a7a7a"/><path d="M420 260C453.3 183.3 446.7 233.3 520 230C593.3 226.7 580 216.7 640 250C700 283.3 680 260 700 330C720 400 720 370 700 460C680 550 686.7 540 640 600C593.3 660 616.7 640 560 640C503.3 640 516.7 660 470 600C423.3 540 436.7 573.3 420 460C403.3 346.7 386.7 336.7 420 260Z" fill="#6a6a6a"/><path d="M400 640C410 583.3 423.3 600 470 620C516.7 640 523.3 640 540 700C556.7 760 553.3 770 520 800C486.7 830 480 843.3 440 790C400 736.7 390 696.7 400 640Z" fill="#7a7a7a"/><path d="M580 700C590 640 596.7 636.7 640 620C683.3 603.3 693.3 596.7 710 650C726.7 703.3 723.3 730 690 780C656.7 830 646.7 826.7 610 800C573.3 773.3 570 760 580 700Z" fill="#7a7a7a"/><path d="M364 434C384.7 385.7 382.7 363.3 420 356C457.3 348.7 453.7 356 476 412C498.3 468 498.3 457 487 524C475.7 591 475.7 590.7 442 613C408.3 635.3 414 628.3 386 591C358 553.7 365.3 553.3 358 501C350.7 448.7 343.3 482.3 364 434Z" fill="#000"/><path d="M635 413C657.3 368.3 653.7 349.3 691 368C728.3 386.7 735.7 402 747 469C758.3 536 754.7 535.7 725 569C695.3 602.3 691.7 591.3 658 569C624.3 546.7 631.7 554 624 502C616.3 450 612.7 457.7 635 413Z" fill="#000"/><path d="M450 110C454 98 458 88 480 90C502 92 528 118 560 120C592 122 618 100 640 100C662 100 666 108 670 120C674 132 674 144 660 160C646 176 628 192 600 200C572 208 548 210 520 200C492 190 474 168 460 150C446 132 446 122 450 110Z" fill="#f6f6f6"/><path d="M510 135C526 126.4 594 126.4 610 135C626 143.6 606 169.4 590 178C574 186.6 546 186.6 530 178C514 169.4 494 143.6 510 135Z" fill="#777"/><ellipse cx="478" cy="215" rx="36" ry="32" fill="#888" stroke="#f6f6f6" stroke-width="16"/><ellipse cx="640" cy="225" rx="34" ry="30" fill="#888" stroke="#f6f6f6" stroke-width="16"/><path d="M420 250C410 283.3 413.3 276.7 390 350C366.7 423.3 363.3 430 350 470" fill="none" stroke="#f6f6f6" stroke-width="24" stroke-linecap="round" stroke-linejoin="round"/><path d="M700 240C706.7 280 703.3 280 720 360C736.7 440 740 440 750 480" fill="none" stroke="#f6f6f6" stroke-width="24" stroke-linecap="round" stroke-linejoin="round"/><path d="M515 450C533.3 410 530 420 560 420C590 420 586.7 410 605 450C623.3 490 620 493.3 615 540C610 586.7 618.3 573.3 590 590C561.7 606.7 558.3 606.7 530 590C501.7 573.3 510 586.7 505 540C500 493.3 496.7 490 515 450Z" fill="#ededed"/><ellipse cx="560" cy="500" rx="25" ry="32" fill="#bbb"/><path d="M500 600C503 581 519 577 530 585C541 593 546 629 555 640C564 651 567 651 575 640C583 629 585 593 595 585C605 577 626 581 625 600C624 619 601 656 590 680C579 704 575 694 570 720C565 746 570 792 565 810C560 828 550 828 545 810C540 792 546 746 540 720C534 694 523 704 515 680C507 656 497 619 500 600Z" fill="#f6f6f6"/><path d="M190 560C200 510 206 520 230 540C254 560 257 566.7 262 620C267 673.3 265.7 676.7 245 700C224.3 723.3 218.3 736.7 200 690C181.7 643.3 180 610 190 560Z" fill="#f6f6f6"/><rect x="187" y="730" width="46" height="140" rx="22" fill="#f6f6f6"/><path d="M900 500C930 456.7 930 473.3 950 520C970 566.7 976.7 580 960 640C943.3 700 933.3 696.7 900 700C866.7 703.3 860 716.7 860 650C860 583.3 870 543.3 900 500Z" fill="#f6f6f6"/><ellipse cx="920" cy="830" rx="30" ry="50" fill="#f6f6f6"/><path d="M380 600C400 580 410 590 420 620C430 650 430 670 410 690C390 710 370 710 360 680C350 650 360 620 380 600Z" fill="#e8e8e8"/><path d="M690 600C710 580 726.7 583.3 740 610C753.3 636.7 750 660 730 680C710 700 693.3 696.7 680 670C666.7 643.3 670 620 690 600Z" fill="#e0e0e0"/><ellipse cx="550" cy="340" rx="35" ry="61" fill="#777"/><ellipse cx="550" cy="340" rx="28" ry="53" fill="#000"/></g><g transform="translate(318 320) scale(0.12891)" filter="url(#bl)"><path d="M540 15C456.7 15 500 8 420 28C340 48 368.3 39.3 300 75C231.7 110.7 261.7 93.3 215 135C168.3 176.7 201.7 160 160 200C118.3 240 128.3 211.7 90 255C51.7 298.3 63.3 271.7 45 330C26.7 388.3 38.3 293.3 35 430C31.7 566.7 23.3 606.7 35 740C46.7 873.3 31.7 776.7 70 830C108.3 883.3 86.7 855 150 900C213.3 945 176.7 930 260 965C343.3 1000 303.3 987.3 400 1005C496.7 1022.7 433.3 1019.7 550 1018C666.7 1016.3 636.7 1024.3 750 1000C863.3 975.7 810 985 890 945C970 905 939.3 928.3 990 880C1040.7 831.7 1022.7 953.3 1042 800C1061.3 646.7 1050.3 595 1048 420C1045.7 245 1064.3 336.7 1035 275C1005.7 213.3 1005 280 960 235C915 190 953.3 195 900 140C846.7 85 876.7 107.3 800 70C723.3 32.7 756.7 46.3 670 28C583.3 9.7 623.3 15 540 15Z" fill="#333" stroke="#565656" stroke-width="10"/><path d="M205 270C201.7 226.7 198.3 230 240 170C281.7 110 263.3 128.3 330 90C396.7 51.7 393.3 58.3 440 55C486.7 51.7 486.7 45 470 80C453.3 115 440 115 390 160C340 205 366.7 168.3 320 215C273.3 261.7 288.3 281.7 250 300C211.7 318.3 208.3 313.3 205 270Z" fill="#8c8c8c"/><path d="M620 70C653.3 53.3 663.3 46.7 740 70C816.7 93.3 795 80 850 140C905 200 888.3 190 905 250C921.7 310 925 323.3 900 320C875 316.7 883.3 293.3 830 240C776.7 186.7 803.3 200 740 160C676.7 120 680 150 640 120C600 90 586.7 86.7 620 70Z" fill="#8c8c8c"/><path d="M260 330C276.7 270 296.7 266.7 340 250C383.3 233.3 380 230 390 280C400 330 403.3 350 370 400C336.7 450 326.7 453.3 290 430C253.3 406.7 243.3 390 260 330Z" fill="#7a7a7a"/><path d="M760 240C790 226.7 796.7 236.7 830 290C863.3 343.3 873.3 356.7 860 400C846.7 443.3 830 443.3 790 420C750 396.7 750 390 740 330C730 270 730 253.3 760 240Z" fill="#7a7a7a"/><path d="M50 440C68.3 403.3 68.3 400 100 400C131.7 400 133.3 396.7 145 440C156.7 483.3 158.3 486.7 135 530C111.7 573.3 105 576.7 75 570C45 563.3 53.3 553.3 45 510C36.7 466.7 31.7 476.7 50 440Z" fill="#8c8c8c"/><path d="M940 420C951.7 366.7 976 371.7 1010 385C1044 398.3 1033.7 395 1042 460C1050.3 525 1057.3 551.7 1035 580C1012.7 608.3 1006.7 598.3 975 545C943.3 491.7 928.3 473.3 940 420Z" fill="#8c8c8c"/><path d="M235 860C255 823.3 251.7 813.3 320 800C388.3 786.7 380 796.7 440 820C500 843.3 493.3 835 500 870C506.7 905 513.3 903.3 460 925C406.7 946.7 406.7 940 340 935C273.3 930 295 935 260 910C225 885 215 896.7 235 860Z" fill="#8c8c8c"/><path d="M590 875C606.7 836.7 610 835 680 810C750 785 733.3 786.7 800 800C866.7 813.3 866.7 811.7 880 850C893.3 888.3 890 886.7 840 915C790 943.3 800 931.7 730 935C660 938.3 676.7 945 630 925C583.3 905 573.3 913.3 590 875Z" fill="#8c8c8c"/><path d="M150 600C166.7 533.3 163.3 533.3 220 520C276.7 506.7 273.3 506.7 320 560C366.7 613.3 356.7 603.3 360 680C363.3 756.7 373.3 750 330 790C286.7 830 283.3 823.3 230 800C176.7 776.7 196.7 786.7 170 720C143.3 653.3 133.3 666.7 150 600Z" fill="#7a7a7a"/><path d="M730 640C740 560 753.3 586.7 810 560C866.7 533.3 853.3 520 900 560C946.7 600 950 603.3 950 680C950 756.7 956.7 750 900 790C843.3 830 836.7 850 780 800C723.3 750 720 720 730 640Z" fill="#7a7a7a"/><path d="M45 640C64.3 603.3 68.3 590 100 610C131.7 630 131.7 636.7 140 700C148.3 763.3 146.7 770 125 800C103.3 830 102.7 816.7 75 790C47.3 763.3 52 770 42 720C32 670 25.7 676.7 45 640Z" fill="#7a7a7a"/><path d="M985 620C1010 580 1020 553.3 1040 600C1060 646.7 1060 693.3 1045 760C1030 826.7 1021.7 813.3 995 800C968.3 786.7 968.3 780 965 720C961.7 660 960 660 985 620Z" fill="#7a7a7a"/><path d="M430 230C453.3 146.7 450 210 520 210C590 210 586.7 190 640 230C693.3 270 673.3 253.3 680 330C686.7 406.7 680 370 660 460C640 550 660 540 620 600C580 660 590 640 540 640C490 640 500 660 470 600C440 540 463.3 583.3 450 460C436.7 336.7 406.7 313.3 430 230Z" fill="#6a6a6a"/><path d="M400 680C410 630 426.7 646.7 470 660C513.3 673.3 515 666.7 530 720C545 773.3 545 790 515 820C485 850 478.3 856.7 440 810C401.7 763.3 390 730 400 680Z" fill="#7a7a7a"/><path d="M570 720C580 666.7 586.7 670 630 660C673.3 650 680 643.3 700 690C720 736.7 723.3 756.7 690 800C656.7 843.3 640 846.7 600 820C560 793.3 560 773.3 570 720Z" fill="#7a7a7a"/><path d="M445 140C430 180 435 163.3 400 260C365 356.7 360 373.3 340 430" fill="none" stroke="#f6f6f6" stroke-width="30" stroke-linecap="round" stroke-linejoin="round"/><path d="M655 130C673.3 173.3 678.3 153.3 710 260C741.7 366.7 736.7 386.7 750 450" fill="none" stroke="#f6f6f6" stroke-width="30" stroke-linecap="round" stroke-linejoin="round"/><path d="M320 468C331 374.7 342.3 370.7 376 311C409.7 251.3 387.3 262.7 421 289C454.7 315.3 451 311.7 477 390C503 468.3 506.3 442 499 524C491.7 606 488.3 587.3 455 636C421.7 684.7 436.3 685 399 670C361.7 655 369.3 658.3 343 591C316.7 523.7 309 561.3 320 468Z" fill="#000"/><path d="M634 390C656.3 319 652.7 303.7 690 311C727.3 318.3 723.7 341 746 412C768.3 483 764.7 456.7 757 524C749.3 591.3 753 580.3 723 614C693 647.7 700.3 655 667 625C633.7 595 634 602.3 623 524C612 445.7 611.7 461 634 390Z" fill="#000"/><path d="M430 130C434 114 444 96 470 90C496 84 526 100 560 100C594 100 616 84 640 90C664 96 676 112 680 130C684 148 676 166 660 180C644 194 628 197 600 200C572 203 550 201 520 195C490 189 468 183 450 170C432 157 426 146 430 130Z" fill="#f6f6f6"/><path d="M500 122C518 112.8 592 112.8 610 122C628 131.2 608 158.8 590 168C572 177.2 538 177.2 520 168C502 158.8 482 131.2 500 122Z" fill="#777"/><ellipse cx="470" cy="215" rx="28" ry="28" fill="#f6f6f6"/><ellipse cx="630" cy="230" rx="28" ry="28" fill="#f6f6f6"/><ellipse cx="545" cy="490" rx="50" ry="55" fill="#ececec"/><ellipse cx="545" cy="490" rx="24" ry="30" fill="#bbb"/><path d="M485 580C488 560 504 552 515 560C526 568 531.4 608 540 620C548.6 632 550 632 558 620C566 608 569.6 568 580 560C590.4 552 610 560 610 580C610 600 591 636 580 660C569 684 561 668 555 700C549 732 555 796 550 820C545 844 535 844 530 820C525 796 531 732 525 700C519 668 508 684 500 660C492 636 482 600 485 580Z" fill="#f6f6f6"/><path d="M522 575C530 569 562.4 569 570 575C577.6 581 565 596.4 560 605C555 613.6 551 618 545 618C539 618 534.6 613.6 530 605C525.4 596.4 514 581 522 575Z" fill="#7c7c7c"/><path d="M325 595C343.3 620 361.7 645 380 670" fill="none" stroke="#f6f6f6" stroke-width="26" stroke-linecap="round" stroke-linejoin="round"/><path d="M700 690C723.3 668.3 746.7 646.7 770 625" fill="none" stroke="#f6f6f6" stroke-width="26" stroke-linecap="round" stroke-linejoin="round"/><path d="M160 560C170 523.3 176.7 526.7 200 540C223.3 553.3 196.7 533.3 230 600C263.3 666.7 283.3 686.7 300 740C316.7 793.3 306.7 773.3 280 760C253.3 746.7 256.7 736.7 220 700C183.3 663.3 190 696.7 170 650C150 603.3 150 596.7 160 560Z" fill="#f6f6f6"/><rect x="187" y="705" width="46" height="170" rx="22" fill="#f6f6f6"/><path d="M890 510C910 486.7 915 483.3 940 500C965 516.7 961.7 500 965 560C968.3 620 971.7 626.7 950 680C928.3 733.3 940 700 900 720C860 740 856.7 740 830 740C803.3 740 806.7 750 820 720C833.3 690 850 700 870 650C890 600 873.3 616.7 880 570C886.7 523.3 870 533.3 890 510Z" fill="#f6f6f6"/><path d="M770 775C786.7 771.7 803.3 768.3 820 765" fill="none" stroke="#eee" stroke-width="16" stroke-linecap="round" stroke-linejoin="round"/><ellipse cx="900" cy="830" rx="28" ry="62" fill="#f6f6f6" transform="rotate(8 900 830)"/><ellipse cx="540" cy="350" rx="35" ry="60" fill="#777"/><ellipse cx="540" cy="350" rx="28" ry="52" fill="#000"/></g><g transform="translate(58 569) scale(0.12891)" filter="url(#bl)"><path d="M560 -30C473.3 -30 506.7 -39.7 420 -18C333.3 3.7 366.7 -7.7 300 35C233.3 77.7 266.7 58.3 220 110C173.3 161.7 203.3 143.3 160 190C116.7 236.7 128.3 203.3 90 250C51.7 296.7 61.7 180 45 330C28.3 480 31.7 543.3 40 700C48.3 856.7 40 740 70 800C100 860 76.7 830 130 880C183.3 930 146.7 910 230 950C313.3 990 270 978.3 380 1000C490 1021.7 440 1015 560 1015C680 1015 630 1021.7 740 1000C850 978.3 806.7 990 890 950C973.3 910 938.3 930 990 880C1041.7 830 1023.3 860 1045 800C1066.7 740 1053.3 856.7 1055 700C1056.7 543.3 1068.3 480 1050 330C1031.7 180 1036.7 296.7 1000 250C963.3 203.3 980 236.7 940 190C900 143.3 926.7 161.7 880 110C833.3 58.3 866.7 77.7 800 35C733.3 -7.7 760 3.7 680 -18C600 -39.7 646.7 -30 560 -30Z" fill="#333" stroke="#565656" stroke-width="10"/><path d="M215 240C208.3 200 215 203.3 260 150C305 96.7 280 116.7 350 80C420 43.3 413.3 46.7 470 40C526.7 33.3 536.7 33.3 520 60C503.3 86.7 480 76.7 420 120C360 163.3 386.7 140 340 190C293.3 240 321.7 253.3 280 270C238.3 286.7 221.7 280 215 240Z" fill="#8c8c8c"/><path d="M600 60C600 36.7 626.7 33.3 700 50C773.3 66.7 756.7 60 820 110C883.3 160 858.3 143.3 890 200C921.7 256.7 921.7 250 915 280C908.3 310 908.3 316.7 870 290C831.7 263.3 856.7 256.7 800 200C743.3 143.3 766.7 166.7 700 120C633.3 73.3 600 83.3 600 60Z" fill="#8c8c8c"/><path d="M60 450C66.7 403.3 80 403.3 110 400C140 396.7 140 400 150 440C160 480 160 486.7 140 520C120 553.3 116.7 563.3 90 540C63.3 516.7 53.3 496.7 60 450Z" fill="#8c8c8c"/><path d="M80 640C100 580 110 566.7 150 570C190 573.3 180 573.3 200 650C220 726.7 226.7 743.3 210 800C193.3 856.7 190 836.7 150 820C110 803.3 113.3 810 90 750C66.7 690 60 700 80 640Z" fill="#8c8c8c"/><path d="M170 500C180 460 196.7 453.3 240 480C283.3 506.7 270 506.7 300 580C330 653.3 343.3 653.3 330 700C316.7 746.7 300 753.3 260 720C220 686.7 240 673.3 210 600C180 526.7 160 540 170 500Z" fill="#7a7a7a"/><path d="M260 820C280 776.7 310 786.7 390 800C470 813.3 476.7 820 500 860C523.3 900 516.7 896.7 460 920C403.3 943.3 396.7 963.3 330 930C263.3 896.7 240 863.3 260 820Z" fill="#8c8c8c"/><path d="M1040 450C1033.3 403.3 1020 403.3 990 400C960 396.7 960 400 950 440C940 480 940 486.7 960 520C980 553.3 983.3 563.3 1010 540C1036.7 516.7 1046.7 496.7 1040 450Z" fill="#8c8c8c"/><path d="M1020 640C1000 580 990 566.7 950 570C910 573.3 920 573.3 900 650C880 726.7 873.3 743.3 890 800C906.7 856.7 910 836.7 950 820C990 803.3 986.7 810 1010 750C1033.3 690 1040 700 1020 640Z" fill="#8c8c8c"/><path d="M930 500C920 460 903.3 453.3 860 480C816.7 506.7 830 506.7 800 580C770 653.3 756.7 653.3 770 700C783.3 746.7 800 753.3 840 720C880 686.7 860 673.3 890 600C920 526.7 940 540 930 500Z" fill="#7a7a7a"/><path d="M840 820C820 776.7 790 786.7 710 800C630 813.3 623.3 820 600 860C576.7 900 583.3 896.7 640 920C696.7 943.3 703.3 963.3 770 930C836.7 896.7 860 863.3 840 820Z" fill="#8c8c8c"/><path d="M430 240C453.3 163.3 463.3 150 540 150C616.7 150 623.3 156.7 660 240C696.7 323.3 666.7 323.3 650 400C633.3 476.7 653.3 446.7 610 470C566.7 493.3 566.7 500 520 470C473.3 440 500 456.7 470 380C440 303.3 406.7 316.7 430 240Z" fill="#7e7e7e"/><path d="M400 760C416.7 716.7 426.7 706.7 470 720C513.3 733.3 520 753.3 530 800C540 846.7 536.7 843.3 500 860C463.3 876.7 453.3 883.3 420 850C386.7 816.7 383.3 803.3 400 760Z" fill="#7a7a7a"/><path d="M580 800C593.3 760 600 743.3 640 740C680 736.7 686.7 750 700 790C713.3 830 713.3 836.7 680 860C646.7 883.3 633.3 880 600 860C566.7 840 566.7 840 580 800Z" fill="#7a7a7a"/><path d="M345 250C328.3 290 315 290 295 370C275 450 276.7 413.3 285 490C293.3 566.7 295 543.3 320 600C345 656.7 346.7 640 360 660" fill="none" stroke="#f6f6f6" stroke-width="16" stroke-linecap="round" stroke-linejoin="round"/><path d="M755 260C775 296.7 791.7 293.3 815 370C838.3 446.7 833.3 413.3 825 490C816.7 566.7 811.7 543.3 790 600C768.3 656.7 770 640 760 660" fill="none" stroke="#f6f6f6" stroke-width="16" stroke-linecap="round" stroke-linejoin="round"/><path d="M309 473C309 353.7 305 376.3 331 283C357 189.7 346 208 387 193C428 178 416.7 170.7 454 238C491.3 305.3 472.7 316.7 499 395C525.3 473.3 540.3 406 533 473C525.7 540 522 521.3 477 596C432 670.7 446.7 682 398 697C349.3 712 360.7 715.7 331 641C301.3 566.3 309 592.3 309 473Z" fill="#000"/><path d="M632 280C661.7 194 650.3 224 699 224C747.7 224 737 194 778 280C819 366 822 362.3 822 482C822 601.7 819 564.3 778 639C737 713.7 744 713.7 699 706C654 698.3 672.7 690.7 643 616C613.3 541.3 613.7 594 610 482C606.3 370 602.3 366 632 280Z" fill="#000"/><path d="M390 200C387.3 173.3 398.7 156.7 420 130C441.3 103.3 432.7 118.7 470 100C507.3 81.3 514.7 62.7 560 60C605.3 57.3 602.7 66 640 90C677.3 114 676 115.3 700 150C724 184.7 730 193.3 730 220C730 246.7 721.3 255.3 700 250C678.7 244.7 687.3 226.7 650 200C612.7 173.3 605.3 152.7 560 150C514.7 147.3 514.7 168.7 480 190C445.3 211.3 454 227.3 430 230C406 232.7 392.7 226.7 390 200Z" fill="#f6f6f6"/><path d="M450 150C486.7 135 490 105 560 105C630 105 626.7 135 660 150" fill="none" stroke="#aaa" stroke-width="10" stroke-linecap="round" stroke-linejoin="round"/><path d="M500 540C518.3 496.7 518.3 470 555 470C591.7 470 591.7 496.7 610 540C628.3 583.3 628.3 566.7 610 600C591.7 633.3 591.7 640 555 640C518.3 640 518.3 633.3 500 600C481.7 566.7 481.7 583.3 500 540Z" fill="#efefef"/><path d="M530 600C510 623.3 520 630 470 670C420 710 410 703.3 380 720" fill="none" stroke="#f6f6f6" stroke-width="46" stroke-linecap="round" stroke-linejoin="round"/><path d="M585 600C603.3 633.3 601.7 643.3 640 700C678.3 756.7 680 746.7 700 770" fill="none" stroke="#f6f6f6" stroke-width="46" stroke-linecap="round" stroke-linejoin="round"/><path d="M545 680C545 730 545 780 545 830" fill="none" stroke="#e8e8e8" stroke-width="14" stroke-linecap="round" stroke-linejoin="round"/><path d="M530 590C538 581 568 580 575 590C582 600 571 627 565 640C559 653 551 656 545 655C539 654 538 648 535 635C532 622 522 599 530 590Z" fill="#7c7c7c"/><path d="M160 600C158 567 181 567 195 575C209 583 217 607 230 640C243 673 230 714 260 740C290 766 350 756 380 770C410 784 426 806 410 810C394 814 331 792 300 790C269 788 266 782 255 800C244 818 253 862 245 880C237 898 223 918 215 890C207 862 216 798 205 740C194 682 162 633 160 600Z" fill="#f6f6f6"/><path d="M940 580C929 568 917 576 905 600C893 624 889 666 880 700C871 734 890 752 860 770C830 788 760 780 730 790C700 800 690 812 710 820C730 828 798 828 830 830C862 832 860 814 870 830C880 846 872 893 880 910C888 927 903 945 910 915C917 885 905 811 915 760C925 709 955 696 960 660C965 624 951 592 940 580Z" fill="#f6f6f6"/><ellipse cx="545" cy="370" rx="35" ry="61" fill="#777"/><ellipse cx="545" cy="370" rx="28" ry="53" fill="#000"/></g><g transform="translate(318 569) scale(0.12891)" filter="url(#bl)"><path d="M540 -32C450 -32 483.3 -42.3 400 -20C316.7 2.3 353.3 -8.3 290 35C226.7 78.3 256.7 58.3 210 110C163.3 161.7 191.7 143.3 150 190C108.3 236.7 121.7 203.3 85 250C48.3 296.7 56.7 180 40 330C23.3 480 26.7 543.3 35 700C43.3 856.7 35 740 65 800C95 860 71.7 830 125 880C178.3 930 141.7 910 225 950C308.3 990 266.7 978.3 375 1000C483.3 1021.7 431.7 1015 550 1015C668.3 1015 620 1021.7 730 1000C840 978.3 796.7 990 880 950C963.3 910 926.7 930 980 880C1033.3 830 1017.3 860 1040 800C1062.7 740 1046.3 856.7 1048 700C1049.7 543.3 1062.7 480 1045 330C1027.3 180 1031.7 296.7 995 250C958.3 203.3 976.7 236.7 935 190C893.3 143.3 918.3 161.7 870 110C821.7 58.3 856.7 78.3 790 35C723.3 -8.3 753.3 2.3 670 -20C586.7 -42.3 630 -32 540 -32Z" fill="#333" stroke="#565656" stroke-width="10"/><path d="M205 240C198.3 203.3 205 205 250 150C295 95 270 115 340 75C410 35 403.3 38.3 460 30C516.7 21.7 526.7 23.3 510 50C493.3 76.7 470 66.7 410 110C350 153.3 376.7 130 330 180C283.3 230 311.7 240 270 260C228.3 280 211.7 276.7 205 240Z" fill="#8c8c8c"/><path d="M590 50C590 26.7 616.7 23.3 690 40C763.3 56.7 746.7 50 810 100C873.3 150 848.3 133.3 880 190C911.7 246.7 911.7 240 905 270C898.3 300 898.3 306.7 860 280C821.7 253.3 846.7 246.7 790 190C733.3 133.3 756.7 156.7 690 110C623.3 63.3 590 73.3 590 50Z" fill="#8c8c8c"/><path d="M55 450C61.7 403.3 75 403.3 105 400C135 396.7 135 400 145 440C155 480 155 486.7 135 520C115 553.3 111.7 563.3 85 540C58.3 516.7 48.3 496.7 55 450Z" fill="#8c8c8c"/><path d="M75 640C95 580 105 566.7 145 570C185 573.3 175 573.3 195 650C215 726.7 221.7 743.3 205 800C188.3 856.7 185 836.7 145 820C105 803.3 108.3 810 85 750C61.7 690 55 700 75 640Z" fill="#8c8c8c"/><path d="M165 500C175 460 191.7 453.3 235 480C278.3 506.7 265 506.7 295 580C325 653.3 338.3 653.3 325 700C311.7 746.7 295 753.3 255 720C215 686.7 235 673.3 205 600C175 526.7 155 540 165 500Z" fill="#7a7a7a"/><path d="M255 820C275 776.7 305 786.7 385 800C465 813.3 471.7 820 495 860C518.3 900 511.7 896.7 455 920C398.3 943.3 391.7 963.3 325 930C258.3 896.7 235 863.3 255 820Z" fill="#8c8c8c"/><path d="M1035 450C1028.3 403.3 1015 403.3 985 400C955 396.7 955 400 945 440C935 480 935 486.7 955 520C975 553.3 978.3 563.3 1005 540C1031.7 516.7 1041.7 496.7 1035 450Z" fill="#8c8c8c"/><path d="M1015 640C995 580 985 566.7 945 570C905 573.3 915 573.3 895 650C875 726.7 868.3 743.3 885 800C901.7 856.7 905 836.7 945 820C985 803.3 981.7 810 1005 750C1028.3 690 1035 700 1015 640Z" fill="#8c8c8c"/><path d="M925 500C915 460 898.3 453.3 855 480C811.7 506.7 825 506.7 795 580C765 653.3 751.7 653.3 765 700C778.3 746.7 795 753.3 835 720C875 686.7 855 673.3 885 600C915 526.7 935 540 925 500Z" fill="#7a7a7a"/><path d="M835 820C815 776.7 785 786.7 705 800C625 813.3 618.3 820 595 860C571.7 900 578.3 896.7 635 920C691.7 943.3 698.3 963.3 765 930C831.7 896.7 855 863.3 835 820Z" fill="#8c8c8c"/><path d="M430 200C453.3 113.3 466.7 120 540 120C613.3 120 616.7 106.7 650 200C683.3 293.3 656.7 306.7 640 400C623.3 493.3 640 456.7 600 480C560 503.3 563.3 503.3 520 470C476.7 436.7 500 470 470 380C440 290 406.7 286.7 430 200Z" fill="#7e7e7e"/><path d="M400 760C416.7 716.7 426.7 706.7 470 720C513.3 733.3 520 753.3 530 800C540 846.7 536.7 843.3 500 860C463.3 876.7 453.3 883.3 420 850C386.7 816.7 383.3 803.3 400 760Z" fill="#7a7a7a"/><path d="M570 800C583.3 760 590 743.3 630 740C670 736.7 676.7 750 690 790C703.3 830 703.3 836.7 670 860C636.7 883.3 623.3 880 590 860C556.7 840 556.7 840 570 800Z" fill="#7a7a7a"/><path d="M335 150C318.3 200 308.3 190 285 300C261.7 410 260 376.7 265 480C270 583.3 273.3 543.3 300 610C326.7 676.7 330 656.7 345 680" fill="none" stroke="#f6f6f6" stroke-width="11" stroke-linecap="round" stroke-linejoin="round"/><path d="M745 160C765 206.7 778.3 193.3 805 300C831.7 406.7 828.3 376.7 825 480C821.7 583.3 820 543.3 795 610C770 676.7 765 656.7 750 680" fill="none" stroke="#f6f6f6" stroke-width="11" stroke-linecap="round" stroke-linejoin="round"/><path d="M288 488C277 361 280.3 401.7 299 286C317.7 170.3 306.7 200.7 344 141C381.3 81.3 373.7 77.3 411 107C448.3 136.7 426.3 133 456 230C485.7 327 477.7 312 500 398C522.3 484 530.3 417 523 488C515.7 559 515.3 536.3 478 611C440.7 685.7 459.7 693.3 411 712C362.3 730.7 373 741.7 332 667C291 592.3 299 615 288 488Z" fill="#000"/><path d="M620 229C646 109.7 635 158.7 676 129C717 99.3 702 88 743 140C784 192 772.7 169.3 799 285C825.3 400.7 825.7 367.3 822 487C818.3 606.7 825.3 562 788 644C750.7 726 758.3 725.7 710 733C661.7 740.3 680.3 748 643 666C605.7 584 605.7 632.7 598 487C590.3 341.3 594 348.3 620 229Z" fill="#000"/><path d="M405 175C405 151 394 136 430 100C466 64 484 42.7 540 40C596 37.3 600 55.3 640 90C680 124.7 678 136.7 690 170C702 203.3 698.3 223 685 215C671.7 207 678.7 170.7 640 140C601.3 109.3 590.7 102.7 540 100C489.3 97.3 479.3 106 450 130C420.7 154 442 178 430 190C418 202 405 199 405 175Z" fill="#f6f6f6"/><path d="M470 110C493.3 98.3 490 75 540 75C590 75 593.3 98.3 620 110" fill="none" stroke="#aaa" stroke-width="8" stroke-linecap="round" stroke-linejoin="round"/><path d="M495 560C511.7 510 511.7 470 545 470C578.3 470 576.7 510 595 560C613.3 610 616.7 586.7 600 620C583.3 653.3 580 660 545 660C510 660 511.7 653.3 495 620C478.3 586.7 478.3 610 495 560Z" fill="#efefef"/><ellipse cx="545" cy="530" rx="18" ry="24" fill="#c4c4c4"/><path d="M520 620C503.3 640 503.3 653.3 470 680C436.7 706.7 436.7 693.3 420 700" fill="none" stroke="#f6f6f6" stroke-width="40" stroke-linecap="round" stroke-linejoin="round"/><path d="M575 620C596.7 653.3 591.7 673.3 640 720C688.3 766.7 693.3 746.7 720 760" fill="none" stroke="#f6f6f6" stroke-width="40" stroke-linecap="round" stroke-linejoin="round"/><path d="M520 615C527.4 608 558 608 565 615C572 622 559.6 640.6 555 650C550.4 659.4 547.4 662 542 662C536.6 662 532.4 659.4 528 650C523.6 640.6 512.6 622 520 615Z" fill="#7c7c7c"/><path d="M330 700C350 706.7 370 713.3 390 720" fill="none" stroke="#eee" stroke-width="22" stroke-linecap="round" stroke-linejoin="round"/><path d="M165 610C181.7 636.7 188.3 636.7 215 690C241.7 743.3 235 743.3 245 770" fill="none" stroke="#f6f6f6" stroke-width="30" stroke-linecap="round" stroke-linejoin="round"/><path d="M245 770C273.3 768.3 280 756.7 330 765C380 773.3 373.3 785 395 795" fill="none" stroke="#f6f6f6" stroke-width="22" stroke-linecap="round" stroke-linejoin="round"/><path d="M245 770C238.3 806.7 231.7 843.3 225 880" fill="none" stroke="#f6f6f6" stroke-width="28" stroke-linecap="round" stroke-linejoin="round"/><path d="M920 610C908.3 640 903.3 636.7 885 700C866.7 763.3 871.7 766.7 865 800" fill="none" stroke="#f6f6f6" stroke-width="30" stroke-linecap="round" stroke-linejoin="round"/><path d="M865 800C836.7 803.3 830 800 780 810C730 820 736.7 823.3 715 830" fill="none" stroke="#f6f6f6" stroke-width="22" stroke-linecap="round" stroke-linejoin="round"/><path d="M865 800C866.7 835 868.3 870 870 905" fill="none" stroke="#f6f6f6" stroke-width="28" stroke-linecap="round" stroke-linejoin="round"/><ellipse cx="535" cy="375" rx="36" ry="60" fill="#777"/><ellipse cx="535" cy="375" rx="28" ry="51" fill="#000"/></g><g filter="url(#tb)"><path d="M107.4 228.2q0 -2.500 2.500 -2.500q20.500 4 41 0q2.500 0 2.500 2.500v4.500q0 2.500 -2.500 2.500h-41q-2.500 0 -2.500 -2.500z" fill="#f6f6f6"/><path d="M366.4 229.8q0 -2.500 2.500 -2.500q20.500 4 41 0q2.500 0 2.500 2.500v4.500q0 2.500 -2.500 2.500h-41q-2.500 0 -2.500 -2.500z" fill="#f6f6f6"/><rect x="107.4" y="482" width="46" height="8.500" rx="3" fill="#f6f6f6"/><rect x="125.6" y="486" width="9" height="5" fill="#000"/><rect x="366.4" y="482" width="46" height="8.500" rx="3" fill="#f6f6f6"/><rect x="384.6" y="486" width="9" height="5" fill="#000"/><rect x="107.4" y="732.6" width="46" height="7.700" rx="3" fill="#f6f6f6"/><rect x="125.4" y="733.5" width="9.400" height="7.200" fill="#000"/><rect x="366.4" y="732.6" width="46" height="7.700" rx="3" fill="#f6f6f6"/><rect x="384.4" y="733.5" width="9.400" height="7.200" fill="#000"/><path d="M321.2 440.9Q389.4 489.2 452 445.5" fill="none" stroke="#d8d8d8" stroke-width="1.3"/><path d="M75 450.6Q129 479.6 183 452.6" fill="none" stroke="#3a3a3a" stroke-width="1.5"/><path d="M62.5 689.7Q130.2 738.2 193 692.7" fill="none" stroke="#d0d0d0" stroke-width="1.3"/><path d="M321.5 689.7Q389.2 738.2 452 692.7" fill="none" stroke="#d8d8d8" stroke-width="1.3"/><path d="M75 703.2Q129 742.2 183 705.2" fill="none" stroke="#444" stroke-width="1.2"/><path d="M334 703.2Q388 742.2 442 705.2" fill="none" stroke="#555" stroke-width="1.2"/></g><rect x="0" y="3.200" width="517" height="1.700" fill="#436060"/><rect x="0" y="4" width="1.200" height="741" fill="#2f5a62"/><rect x="257" y="5" width="3" height="740" fill="#235e6f"/><rect x="514" y="5" width="1.600" height="740" fill="#234a56"/><rect x="0" y="248.500" width="517" height="4.300" fill="#1d5f72"/><rect x="0" y="496.400" width="517" height="5.400" fill="#1a6378"/><rect x="0" y="498.200" width="517" height="1.800" fill="#0f5268"/><g fill="#f4f4f4" stroke="#f4f4f4" stroke-width=".22" font-family="'Liberation Serif','Noto Serif CJK SC',serif" filter="url(#tb)"><text transform="translate(3.6 25.6) scale(0.45 1)" text-anchor="start" font-size="17" vector-effect="non-scaling-stroke">ID:190694</text><text transform="translate(3.6 44.7) scale(.56 1)" font-size="14" font-family="'Noto Sans CJK SC',sans-serif" font-weight="500">姓名</text><text transform="translate(19.5 45) scale(0.45 1)" text-anchor="start" font-size="17" vector-effect="non-scaling-stroke">:ZHANG CHE</text><text transform="translate(3.6 64.1) scale(.56 1)" font-size="14" font-family="'Noto Sans CJK SC',sans-serif" font-weight="500">性别</text><text transform="translate(19.5 64.4) scale(0.45 1)" text-anchor="start" font-size="17" vector-effect="non-scaling-stroke">:M</text><text transform="translate(3.6 83.4) scale(.56 1)" font-size="14" font-family="'Noto Sans CJK SC',sans-serif" font-weight="500">年龄</text><text transform="translate(19.5 83.7) scale(0.45 1)" text-anchor="start" font-size="17" vector-effect="non-scaling-stroke">:045Y</text><text transform="translate(255.2 25.6) scale(0.435 1)" text-anchor="end" font-size="17" vector-effect="non-scaling-stroke">series no:3</text><text transform="translate(255.2 45) scale(0.435 1)" text-anchor="end" font-size="17" vector-effect="non-scaling-stroke">image no:2</text><text transform="translate(255.2 64.4) scale(0.435 1)" text-anchor="end" font-size="17" vector-effect="non-scaling-stroke">Position:382.9</text><text transform="translate(253.7 144.5) scale(0.435 1)" text-anchor="end" font-size="17" vector-effect="non-scaling-stroke">[L]</text><text transform="translate(6.3 183.6) scale(0.45 1)" text-anchor="start" font-size="16" vector-effect="non-scaling-stroke">10cm</text><text transform="translate(3.6 222.2) scale(.56 1)" font-size="14" font-family="'Noto Sans CJK SC',sans-serif" font-weight="500">日期</text><text transform="translate(19.5 222.5) scale(0.45 1)" text-anchor="start" font-size="17" vector-effect="non-scaling-stroke">:20130805</text><text transform="translate(3.6 241.3) scale(.56 1)" font-size="14" font-family="'Noto Sans CJK SC',sans-serif" font-weight="500">时间</text><text transform="translate(19.5 241.6) scale(0.45 1)" text-anchor="start" font-size="17" vector-effect="non-scaling-stroke">:085308</text><text transform="translate(255.2 241.6) scale(0.435 1)" text-anchor="end" font-size="17" vector-effect="non-scaling-stroke">W:400 L:40</text><path d="M4.6 91.8V160.3M4.1 92.4h7M4.1 99.2h3.8M4.1 106h3.8M4.1 112.8h3.8M4.1 119.6h3.8M4.1 126.4h7M4.1 133.2h3.8M4.1 140h3.8M4.1 146.8h3.8M4.1 153.6h3.8M4.1 160.4h7" stroke="#f0f0f0" stroke-width="1.200" fill="none"/><text transform="translate(262.6 25.6) scale(0.45 1)" text-anchor="start" font-size="17" vector-effect="non-scaling-stroke">ID:190694</text><text transform="translate(262.6 44.7) scale(.56 1)" font-size="14" font-family="'Noto Sans CJK SC',sans-serif" font-weight="500">姓名</text><text transform="translate(278.5 45) scale(0.45 1)" text-anchor="start" font-size="17" vector-effect="non-scaling-stroke">:ZHANG CHE</text><text transform="translate(262.6 64.1) scale(.56 1)" font-size="14" font-family="'Noto Sans CJK SC',sans-serif" font-weight="500">性别</text><text transform="translate(278.5 64.4) scale(0.45 1)" text-anchor="start" font-size="17" vector-effect="non-scaling-stroke">:M</text><text transform="translate(262.6 83.4) scale(.56 1)" font-size="14" font-family="'Noto Sans CJK SC',sans-serif" font-weight="500">年龄</text><text transform="translate(278.5 83.7) scale(0.45 1)" text-anchor="start" font-size="17" vector-effect="non-scaling-stroke">:045Y</text><text transform="translate(514.2 25.6) scale(0.435 1)" text-anchor="end" font-size="17" vector-effect="non-scaling-stroke">series no:3</text><text transform="translate(514.2 45) scale(0.435 1)" text-anchor="end" font-size="17" vector-effect="non-scaling-stroke">image no:3</text><text transform="translate(514.2 64.4) scale(0.435 1)" text-anchor="end" font-size="17" vector-effect="non-scaling-stroke">Position:377.9</text><text transform="translate(512.7 144.5) scale(0.435 1)" text-anchor="end" font-size="17" vector-effect="non-scaling-stroke">[L]</text><text transform="translate(265.3 183.6) scale(0.45 1)" text-anchor="start" font-size="16" vector-effect="non-scaling-stroke">10cm</text><text transform="translate(262.6 222.2) scale(.56 1)" font-size="14" font-family="'Noto Sans CJK SC',sans-serif" font-weight="500">日期</text><text transform="translate(278.5 222.5) scale(0.45 1)" text-anchor="start" font-size="17" vector-effect="non-scaling-stroke">:20130805</text><text transform="translate(262.6 241.3) scale(.56 1)" font-size="14" font-family="'Noto Sans CJK SC',sans-serif" font-weight="500">时间</text><text transform="translate(278.5 241.6) scale(0.45 1)" text-anchor="start" font-size="17" vector-effect="non-scaling-stroke">:085308</text><text transform="translate(514.2 241.6) scale(0.435 1)" text-anchor="end" font-size="17" vector-effect="non-scaling-stroke">W:400 L:40</text><path d="M263.6 91.8V160.3M263.1 92.4h7M263.1 99.2h3.8M263.1 106h3.8M263.1 112.8h3.8M263.1 119.6h3.8M263.1 126.4h7M263.1 133.2h3.8M263.1 140h3.8M263.1 146.8h3.8M263.1 153.6h3.8M263.1 160.4h7" stroke="#f0f0f0" stroke-width="1.200" fill="none"/><text transform="translate(3.6 274.2) scale(0.45 1)" text-anchor="start" font-size="17" vector-effect="non-scaling-stroke">ID:190694</text><text transform="translate(3.6 293.3) scale(.56 1)" font-size="14" font-family="'Noto Sans CJK SC',sans-serif" font-weight="500">姓名</text><text transform="translate(19.5 293.6) scale(0.45 1)" text-anchor="start" font-size="17" vector-effect="non-scaling-stroke">:ZHANG CHE</text><text transform="translate(3.6 312.7) scale(.56 1)" font-size="14" font-family="'Noto Sans CJK SC',sans-serif" font-weight="500">性别</text><text transform="translate(19.5 313) scale(0.45 1)" text-anchor="start" font-size="17" vector-effect="non-scaling-stroke">:M</text><text transform="translate(3.6 332) scale(.56 1)" font-size="14" font-family="'Noto Sans CJK SC',sans-serif" font-weight="500">年龄</text><text transform="translate(19.5 332.3) scale(0.45 1)" text-anchor="start" font-size="17" vector-effect="non-scaling-stroke">:045Y</text><text transform="translate(255.2 274.2) scale(0.435 1)" text-anchor="end" font-size="17" vector-effect="non-scaling-stroke">series no:3</text><text transform="translate(255.2 293.6) scale(0.435 1)" text-anchor="end" font-size="17" vector-effect="non-scaling-stroke">image no:5</text><text transform="translate(255.2 313) scale(0.435 1)" text-anchor="end" font-size="17" vector-effect="non-scaling-stroke">Position:367.9</text><text transform="translate(253.7 393.1) scale(0.435 1)" text-anchor="end" font-size="17" vector-effect="non-scaling-stroke">[L]</text><text transform="translate(6.3 432.2) scale(0.45 1)" text-anchor="start" font-size="16" vector-effect="non-scaling-stroke">10cm</text><text transform="translate(3.6 470.8) scale(.56 1)" font-size="14" font-family="'Noto Sans CJK SC',sans-serif" font-weight="500">日期</text><text transform="translate(19.5 471.1) scale(0.45 1)" text-anchor="start" font-size="17" vector-effect="non-scaling-stroke">:20130805</text><text transform="translate(3.6 489.9) scale(.56 1)" font-size="14" font-family="'Noto Sans CJK SC',sans-serif" font-weight="500">时间</text><text transform="translate(19.5 490.2) scale(0.45 1)" text-anchor="start" font-size="17" vector-effect="non-scaling-stroke">:085308</text><text transform="translate(255.2 490.2) scale(0.435 1)" text-anchor="end" font-size="17" vector-effect="non-scaling-stroke">W:400 L:40</text><path d="M4.6 340.4V408.9M4.1 341h7M4.1 347.8h3.8M4.1 354.6h3.8M4.1 361.4h3.8M4.1 368.2h3.8M4.1 375h7M4.1 381.8h3.8M4.1 388.6h3.8M4.1 395.4h3.8M4.1 402.2h3.8M4.1 409h7" stroke="#f0f0f0" stroke-width="1.200" fill="none"/><text transform="translate(262.6 274.2) scale(0.45 1)" text-anchor="start" font-size="17" vector-effect="non-scaling-stroke">ID:190694</text><text transform="translate(262.6 293.3) scale(.56 1)" font-size="14" font-family="'Noto Sans CJK SC',sans-serif" font-weight="500">姓名</text><text transform="translate(278.5 293.6) scale(0.45 1)" text-anchor="start" font-size="17" vector-effect="non-scaling-stroke">:ZHANG CHE</text><text transform="translate(262.6 312.7) scale(.56 1)" font-size="14" font-family="'Noto Sans CJK SC',sans-serif" font-weight="500">性别</text><text transform="translate(278.5 313) scale(0.45 1)" text-anchor="start" font-size="17" vector-effect="non-scaling-stroke">:M</text><text transform="translate(262.6 332) scale(.56 1)" font-size="14" font-family="'Noto Sans CJK SC',sans-serif" font-weight="500">年龄</text><text transform="translate(278.5 332.3) scale(0.45 1)" text-anchor="start" font-size="17" vector-effect="non-scaling-stroke">:045Y</text><text transform="translate(514.2 274.2) scale(0.435 1)" text-anchor="end" font-size="17" vector-effect="non-scaling-stroke">series no:3</text><text transform="translate(514.2 293.6) scale(0.435 1)" text-anchor="end" font-size="17" vector-effect="non-scaling-stroke">image no:6</text><text transform="translate(514.2 313) scale(0.435 1)" text-anchor="end" font-size="17" vector-effect="non-scaling-stroke">Position:362.9</text><text transform="translate(512.7 393.1) scale(0.435 1)" text-anchor="end" font-size="17" vector-effect="non-scaling-stroke">[L]</text><text transform="translate(265.3 432.2) scale(0.45 1)" text-anchor="start" font-size="16" vector-effect="non-scaling-stroke">10cm</text><text transform="translate(262.6 470.8) scale(.56 1)" font-size="14" font-family="'Noto Sans CJK SC',sans-serif" font-weight="500">日期</text><text transform="translate(278.5 471.1) scale(0.45 1)" text-anchor="start" font-size="17" vector-effect="non-scaling-stroke">:20130805</text><text transform="translate(262.6 489.9) scale(.56 1)" font-size="14" font-family="'Noto Sans CJK SC',sans-serif" font-weight="500">时间</text><text transform="translate(278.5 490.2) scale(0.45 1)" text-anchor="start" font-size="17" vector-effect="non-scaling-stroke">:085308</text><text transform="translate(514.2 490.2) scale(0.435 1)" text-anchor="end" font-size="17" vector-effect="non-scaling-stroke">W:400 L:40</text><path d="M263.6 340.4V408.9M263.1 341h7M263.1 347.8h3.8M263.1 354.6h3.8M263.1 361.4h3.8M263.1 368.2h3.8M263.1 375h7M263.1 381.8h3.8M263.1 388.6h3.8M263.1 395.4h3.8M263.1 402.2h3.8M263.1 409h7" stroke="#f0f0f0" stroke-width="1.200" fill="none"/><text transform="translate(3.6 522.8) scale(0.45 1)" text-anchor="start" font-size="17" vector-effect="non-scaling-stroke">ID:190694</text><text transform="translate(3.6 541.9) scale(.56 1)" font-size="14" font-family="'Noto Sans CJK SC',sans-serif" font-weight="500">姓名</text><text transform="translate(19.5 542.2) scale(0.45 1)" text-anchor="start" font-size="17" vector-effect="non-scaling-stroke">:ZHANG CHE</text><text transform="translate(3.6 561.3) scale(.56 1)" font-size="14" font-family="'Noto Sans CJK SC',sans-serif" font-weight="500">性别</text><text transform="translate(19.5 561.6) scale(0.45 1)" text-anchor="start" font-size="17" vector-effect="non-scaling-stroke">:M</text><text transform="translate(3.6 580.6) scale(.56 1)" font-size="14" font-family="'Noto Sans CJK SC',sans-serif" font-weight="500">年龄</text><text transform="translate(19.5 580.9) scale(0.45 1)" text-anchor="start" font-size="17" vector-effect="non-scaling-stroke">:045Y</text><text transform="translate(255.2 522.8) scale(0.435 1)" text-anchor="end" font-size="17" vector-effect="non-scaling-stroke">series no:3</text><text transform="translate(255.2 542.2) scale(0.435 1)" text-anchor="end" font-size="17" vector-effect="non-scaling-stroke">image no:8</text><text transform="translate(255.2 561.6) scale(0.435 1)" text-anchor="end" font-size="17" vector-effect="non-scaling-stroke">Position:352.9</text><text transform="translate(253.7 641.7) scale(0.435 1)" text-anchor="end" font-size="17" vector-effect="non-scaling-stroke">[L]</text><text transform="translate(6.3 680.8) scale(0.45 1)" text-anchor="start" font-size="16" vector-effect="non-scaling-stroke">10cm</text><text transform="translate(3.6 719.4) scale(.56 1)" font-size="14" font-family="'Noto Sans CJK SC',sans-serif" font-weight="500">日期</text><text transform="translate(19.5 719.7) scale(0.45 1)" text-anchor="start" font-size="17" vector-effect="non-scaling-stroke">:20130805</text><text transform="translate(3.6 738.5) scale(.56 1)" font-size="14" font-family="'Noto Sans CJK SC',sans-serif" font-weight="500">时间</text><text transform="translate(19.5 738.8) scale(0.45 1)" text-anchor="start" font-size="17" vector-effect="non-scaling-stroke">:085308</text><text transform="translate(255.2 738.8) scale(0.435 1)" text-anchor="end" font-size="17" vector-effect="non-scaling-stroke">W:400 L:40</text><path d="M4.6 589V657.5M4.1 589.6h7M4.1 596.4h3.8M4.1 603.2h3.8M4.1 610h3.8M4.1 616.8h3.8M4.1 623.6h7M4.1 630.4h3.8M4.1 637.2h3.8M4.1 644h3.8M4.1 650.8h3.8M4.1 657.6h7" stroke="#f0f0f0" stroke-width="1.200" fill="none"/><text transform="translate(262.6 522.8) scale(0.45 1)" text-anchor="start" font-size="17" vector-effect="non-scaling-stroke">ID:190694</text><text transform="translate(262.6 541.9) scale(.56 1)" font-size="14" font-family="'Noto Sans CJK SC',sans-serif" font-weight="500">姓名</text><text transform="translate(278.5 542.2) scale(0.45 1)" text-anchor="start" font-size="17" vector-effect="non-scaling-stroke">:ZHANG CHE</text><text transform="translate(262.6 561.3) scale(.56 1)" font-size="14" font-family="'Noto Sans CJK SC',sans-serif" font-weight="500">性别</text><text transform="translate(278.5 561.6) scale(0.45 1)" text-anchor="start" font-size="17" vector-effect="non-scaling-stroke">:M</text><text transform="translate(262.6 580.6) scale(.56 1)" font-size="14" font-family="'Noto Sans CJK SC',sans-serif" font-weight="500">年龄</text><text transform="translate(278.5 580.9) scale(0.45 1)" text-anchor="start" font-size="17" vector-effect="non-scaling-stroke">:045Y</text><text transform="translate(514.2 522.8) scale(0.435 1)" text-anchor="end" font-size="17" vector-effect="non-scaling-stroke">series no:3</text><text transform="translate(514.2 542.2) scale(0.435 1)" text-anchor="end" font-size="17" vector-effect="non-scaling-stroke">image no:9</text><text transform="translate(514.2 561.6) scale(0.435 1)" text-anchor="end" font-size="17" vector-effect="non-scaling-stroke">Position:347.9</text><text transform="translate(512.7 641.7) scale(0.435 1)" text-anchor="end" font-size="17" vector-effect="non-scaling-stroke">[L]</text><text transform="translate(265.3 680.8) scale(0.45 1)" text-anchor="start" font-size="16" vector-effect="non-scaling-stroke">10cm</text><text transform="translate(262.6 719.4) scale(.56 1)" font-size="14" font-family="'Noto Sans CJK SC',sans-serif" font-weight="500">日期</text><text transform="translate(278.5 719.7) scale(0.45 1)" text-anchor="start" font-size="17" vector-effect="non-scaling-stroke">:20130805</text><text transform="translate(262.6 738.5) scale(.56 1)" font-size="14" font-family="'Noto Sans CJK SC',sans-serif" font-weight="500">时间</text><text transform="translate(278.5 738.8) scale(0.45 1)" text-anchor="start" font-size="17" vector-effect="non-scaling-stroke">:085308</text><text transform="translate(514.2 738.8) scale(0.435 1)" text-anchor="end" font-size="17" vector-effect="non-scaling-stroke">W:400 L:40</text><path d="M263.6 589V657.5M263.1 589.6h7M263.1 596.4h3.8M263.1 603.2h3.8M263.1 610h3.8M263.1 616.8h3.8M263.1 623.6h7M263.1 630.4h3.8M263.1 637.2h3.8M263.1 644h3.8M263.1 650.8h3.8M263.1 657.6h7" stroke="#f0f0f0" stroke-width="1.200" fill="none"/></g><text transform="translate(1.5 408) scale(.608 1)" font-family="'Liberation Sans',sans-serif" font-size="47" fill="#3a12e8" opacity=".95">//www.cnblogs.com/poxiao</text></svg></div>

<div class="tabs">
  <div class="pill">报告</div>
  <span style="left:689px">视频</span><span style="left:739px">多媒体共享</span><span style="left:827px">电子白板</span><span style="left:908px">屏幕共享</span>
</div>
<div class="rp">
  <div class="sech" style="top:204px"><span>诊断所见</span></div>
  <div class="white" style="top:244px;height:205px"></div>
  <div class="sech" style="top:449px"><span>诊断意见</span></div>
  <div class="white" style="top:489px;height:191px"></div>
  <div class="gbtn" style="left:608px;top:693px;width:80px;text-indent:-7px">模板</div>
  <div class="gbtn" style="left:1202px;top:693px;width:80px;text-indent:-2px">保存报告</div>
</div>
<div class="chat"><div class="chat-l"></div><div class="chat-r"></div><div class="chat-rt"></div><div class="vline"></div><div class="hline"></div><div class="bline"></div><svg class="people" width="24" height="18" viewBox="0 0 24 18"><path d="M17.2 5.2c1.6 0 2.6 1.3 2.6 3 0 1.2-.5 2.2-1.2 2.8v1c1.6.6 4.6 1.6 4.9 2.6.2.6.3 2.2.3 2.9H12.5c0-.8 0-1.7.4-2.5.6-1 2-1.7 3-2.100v-1c-.7-.6-1.200-1.600-1.200-2.800 0-1.700 1-3 2.500-3z" fill="#99a1b2"/><path d="M8.200.3c2.200 0 3.700 1.800 3.700 4.200 0 1.700-.7 3.100-1.700 3.900v1.500c2.300.8 5.300 2 5.800 3.300.3.900.4 3.200.4 4.300H.3c0-1.100 0-3.400.4-4.300.5-1.300 3.400-2.500 5.700-3.300V8.400c-1-.8-1.700-2.200-1.700-3.900C4.700 2.100 6.100.3 8.200.3z" fill="#c3c9d5"/></svg><span class="t w" style="left:634px;top:752px">在线人</span><span class="t" style="left:635px;top:785px">张三</span><span class="t" style="left:635px;top:815px">李四</span><span class="t" style="left:635px;top:845px">王五</span><span class="t" style="left:635px;top:875px">朱七</span><span class="t" style="left:635px;top:905px">曹操</span><span class="t" style="left:831px;top:751px">张三</span><span class="t" style="left:863.500px;top:751px">说：</span><span class="t" style="left:888.500px;top:751px">脖子有点酸</span><span class="t" style="left:831px;top:868px">脖子有点酸</span><div class="caret"></div><div class="sel"><span>所有人</span><svg width="11" height="9" viewBox="0 0 11 9"><path d="M0 0H11L5.5 9Z" fill="#6a6fd0"/></svg></div><span class="bigA">A</span><div class="send">发送</div></div>
<div class="bb"><svg style="position:absolute;left:86px;top:943px" width="14" height="26" viewBox="0 0 14 26"><rect x="3.500" y="1" width="7" height="14" rx="3.500" fill="#b9c0cd"/><path d="M1.500 10.500v1.500a5.500 5.500 0 0 0 11 0v-1.500" fill="none" stroke="#b9c0cd" stroke-width="1.300"/><path d="M7 17.500V23M3 23.500H11" stroke="#b9c0cd" stroke-width="1.400"/><path d="M3.500 8.500H10.500" stroke="#8f98a8" stroke-width="1"/></svg><div class="track" style="left:108px;width:89px"></div><div class="thumb" style="left:140.600px"></div><svg style="position:absolute;left:215px;top:945px" width="27" height="20" viewBox="0 0 27 20"><path d="M1 6h4.500L12 1v18L5.500 14H1z" fill="#b9c0cd"/><path d="M15 6.500a5 5 0 0 1 0 7M17.800 4a8.500 8.500 0 0 1 0 12M20.800 1.800a12 12 0 0 1 0 16.400" fill="none" stroke="#b9c0cd" stroke-width="1.700" stroke-linecap="round"/></svg><div class="track" style="left:246px;width:89px"></div><div class="thumb" style="left:277.700px"></div><span class="t" style="left:383px;top:948px">会议<i>ID</i>号<i>: NULL</i></span><div class="gbtn" style="left:485px;top:942px;width:80px;text-indent:-3px">复制<i>ID</i>号</div><div class="gbtn ic" style="left:760px;top:942px;width:80px"><svg width="23" height="18" viewBox="0 0 23 18" style="left:12px;top:3px"><circle cx="5" cy="4.500" r="4" fill="#fff"/><circle cx="13" cy="4.500" r="4" fill="#fff"/><rect x="1.500" y="8" width="15" height="9.500" rx="1.200" fill="#fff"/><path d="M17 11.500L22 8.500V17L17 14z" fill="#fff"/></svg><span style="left:40px">录像</span></div><span class="t" style="left:853px;top:948px">已进行：</span><span class="t" style="left:902px;top:948px"><i>NULL</i>分钟</span><div class="gbtn ic" style="left:994px;top:942px;width:91px"><svg width="16" height="16" viewBox="-8 -8 16 16" style="left:10px;top:4.500px"><g fill="#fff"><rect x="-1.700" y="-8" width="3.400" height="4" rx=".6" transform="rotate(0)"/><rect x="-1.700" y="-8" width="3.400" height="4" rx=".6" transform="rotate(45)"/><rect x="-1.700" y="-8" width="3.400" height="4" rx=".6" transform="rotate(90)"/><rect x="-1.700" y="-8" width="3.400" height="4" rx=".6" transform="rotate(135)"/><rect x="-1.700" y="-8" width="3.400" height="4" rx=".6" transform="rotate(180)"/><rect x="-1.700" y="-8" width="3.400" height="4" rx=".6" transform="rotate(225)"/><rect x="-1.700" y="-8" width="3.400" height="4" rx=".6" transform="rotate(270)"/><rect x="-1.700" y="-8" width="3.400" height="4" rx=".6" transform="rotate(315)"/></g><circle r="4.600" fill="none" stroke="#fff" stroke-width="3"/></svg><span style="left:31px">系统设置</span></div><div class="gbtn ic" style="left:1092px;top:942px;width:91px"><svg width="18" height="16" viewBox="0 0 18 16" style="left:7.500px;top:4.500px"><path d="M2.200 11V8.500a6.800 6.800 0 0 1 13.600 0V11" fill="none" stroke="#fff" stroke-width="1.700"/><rect x=".5" y="9" width="4.200" height="6.500" rx="1.800" fill="#fff"/><rect x="13.300" y="9" width="4.200" height="6.500" rx="1.800" fill="#fff"/></svg><span style="left:32px">联系客服</span></div><div class="gbtn ic" style="left:1190px;top:942px;width:91px"><svg width="15" height="15" viewBox="0 0 15 15" style="left:11px;top:5px"><path d="M7.500 .5L15 7.500H13V15H9.300V10H5.700V15H2V7.500H0z" fill="#fff"/><rect x="10.300" y="1" width="2.200" height="4" fill="#fff"/></svg><span style="left:32px">返回首页</span></div></div>
</div>
<div class="wm2">lookzn.com</div>
</body></html>
